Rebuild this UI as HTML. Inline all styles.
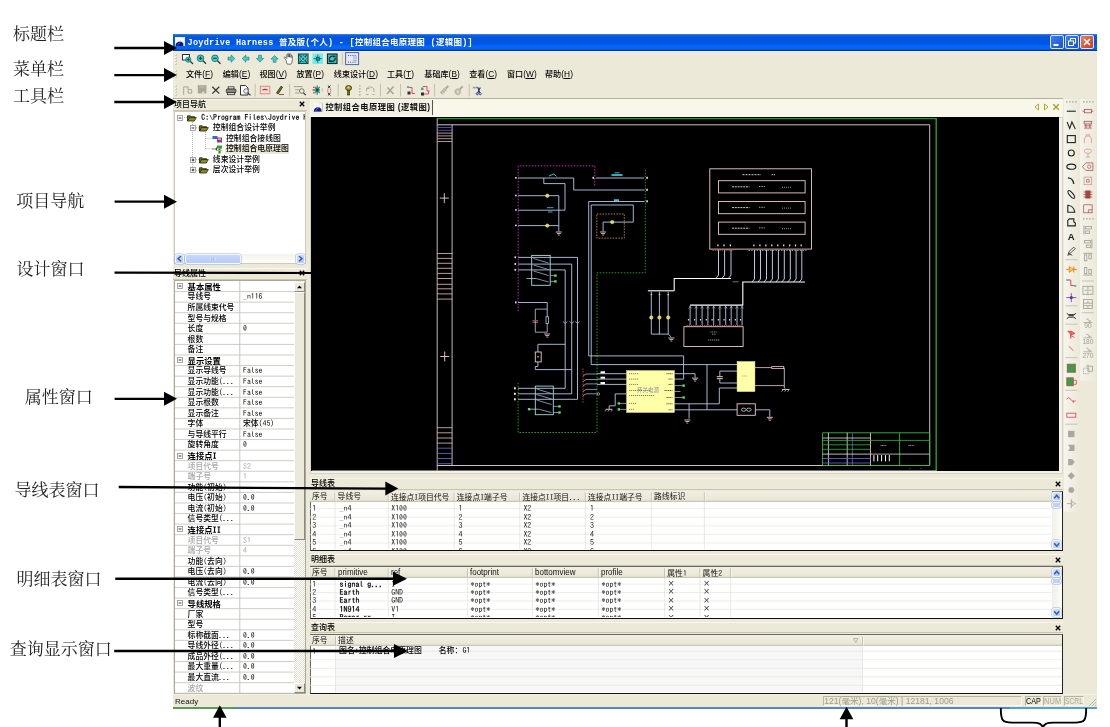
<!DOCTYPE html>
<html lang="zh"><head><meta charset="utf-8"><title>Joydrive Harness</title>
<style>
html,body{margin:0;padding:0;background:#fff}
body{width:1110px;height:727px;position:relative;overflow:hidden;will-change:transform;font-family:"Liberation Sans","Noto Sans CJK SC",sans-serif;color:#000}
div,span.t,span.s,span.m,svg{position:absolute;box-sizing:border-box}
span.t{white-space:nowrap;font-family:"Liberation Sans","Noto Sans CJK SC",sans-serif}
span.s{white-space:nowrap;font-family:"Liberation Serif","Noto Serif CJK SC",serif}
span.m{white-space:nowrap;font-family:"Liberation Mono","Noto Sans CJK SC",monospace}
</style></head><body>

<div style="left:173px;top:34px;width:924px;height:675px;background:#ece9d8"></div>
<div style="left:173px;top:33.8px;width:924px;height:17.2px;background:linear-gradient(#4a86e0 0,#0c5cd8 10%,#0054e2 25%,#0056e4 60%,#0468fc 72%,#0464f4 89%,#08389c 95%,#08389c 100%)"></div>
<div style="left:173px;top:51px;width:924px;height:1.2px;background:#e6eefa"></div>
<svg style="left:175px;top:37px" width="10" height="9" viewBox="0 0 10 9" ><rect x="0" y="0" width="10" height="9" fill="#f6f6f4"/><path d="M6.2 1 l2 -0.7 l1.2 1.6" stroke="#e4e088" stroke-width="1" fill="none"/><path d="M0.6 9 a4.2 4.2 0 0 1 7.8 -2.4 v2.4z" fill="#101878"/><path d="M2.4 8.4 q0.8 -2.2 3.2 -3" stroke="#4868e0" stroke-width="0.9" fill="none"/><path d="M9.4 2.4 v6.6" stroke="#e8e8f0" stroke-width="1.1"/></svg>
<span class="m" style="left:187.6px;top:38.3px;font-size:8.5px;line-height:11px;color:#fff;font-weight:bold;letter-spacing:0.27px">Joydrive Harness 普及版(个人) - [控制组合电原理图 (逻辑图)]</span>
<div style="left:1050px;top:35px;width:14px;height:14px;background:linear-gradient(135deg,#3c80f0,#1c50d0);border:1px solid #dce6fa;border-radius:2px"></div>
<svg style="left:1050px;top:35px" width="14" height="14" viewBox="0 0 14 14" ><rect x="3.5" y="9" width="5" height="2" fill="#fff"/></svg>
<div style="left:1065px;top:35px;width:14px;height:14px;background:linear-gradient(135deg,#3c80f0,#1c50d0);border:1px solid #dce6fa;border-radius:2px"></div>
<svg style="left:1065px;top:35px" width="14" height="14" viewBox="0 0 14 14" ><rect x="5.5" y="3.5" width="5" height="4.5" fill="none" stroke="#fff" stroke-width="1"/><rect x="3.5" y="6" width="5" height="4.5" fill="#2a64dc" stroke="#fff" stroke-width="1"/></svg>
<div style="left:1080px;top:35px;width:14px;height:14px;background:linear-gradient(135deg,#e88060,#c83c18);border:1px solid #dce6fa;border-radius:2px"></div>
<svg style="left:1080px;top:35px" width="14" height="14" viewBox="0 0 14 14" ><path d="M4 4 L10 10 M10 4 L4 10" stroke="#fff" stroke-width="1.6"/></svg>
<svg style="left:175px;top:54px" width="3" height="12" viewBox="0 0 3 12" ><rect x="0" y="0" width="2" height="2" fill="#cfccb8"/><rect x="0" y="0" width="1" height="1" fill="#f8f7f0"/><rect x="0" y="3" width="2" height="2" fill="#cfccb8"/><rect x="0" y="3" width="1" height="1" fill="#f8f7f0"/><rect x="0" y="6" width="2" height="2" fill="#cfccb8"/><rect x="0" y="6" width="1" height="1" fill="#f8f7f0"/><rect x="0" y="9" width="2" height="2" fill="#cfccb8"/><rect x="0" y="9" width="1" height="1" fill="#f8f7f0"/></svg>
<svg style="left:173px;top:51px" width="300" height="16" viewBox="0 0 300 16" ><rect x="9.5" y="3.5" width="7" height="5.5" fill="#fff" stroke="#303030" stroke-width="1"/><line x1="17" y1="10" x2="20" y2="13" stroke="#303030" stroke-width="1.2"/><circle cx="15.3" cy="8.6" r="2.6" fill="#30d8d8" stroke="#206868" stroke-width="0.8"/><path d="M13.8 8.6 h3 M15.3 7.1 v3" stroke="#103838" stroke-width="0.9"/><line x1="29.5" y1="9.3" x2="33.0" y2="12.8" stroke="#303030" stroke-width="1.3"/><circle cx="27.5" cy="7.3" r="3.3" fill="#30d8d8" stroke="#206868" stroke-width="0.9"/><path d="M25.7 7.3 h3.6 M27.5 5.5 v3.6" stroke="#103838" stroke-width="1.1"/><line x1="44" y1="9.3" x2="47.5" y2="12.8" stroke="#303030" stroke-width="1.3"/><circle cx="42" cy="7.3" r="3.3" fill="#30d8d8" stroke="#206868" stroke-width="0.9"/><path d="M40.2 7.3 h3.6" stroke="#103838" stroke-width="1.1"/><path d="M55 6.2 h3.2 v-2.2 l3.6 3.6 l-3.6 3.6 v-2.2 h-3.2z" fill="#30d8d8" stroke="#206868" stroke-width="0.6"/><path d="M76 6.2 h-3.2 v-2.2 l-3.6 3.6 l3.6 3.6 v-2.2 h3.2z" fill="#30d8d8" stroke="#206868" stroke-width="0.6"/><path d="M85.6 4.3 v3.2 h-2.2 l3.6 3.6 l3.6 -3.6 h-2.2 v-3.2z" fill="#30d8d8" stroke="#206868" stroke-width="0.6"/><path d="M100.2 11.3 v-3.2 h-2.2 l3.6 -3.6 l3.6 3.6 h-2.2 v3.2z" fill="#30d8d8" stroke="#206868" stroke-width="0.6"/><path d="M113.2 9.2 l-2.2 -2.6 q0.6 -1.2 1.6 -0.2 l1.2 1.2 v-4 q0.7 -0.9 1.4 0 v2.6 v-3.4 q0.7 -0.9 1.4 0 v3.4 v-2.8 q0.7 -0.9 1.4 0 v3.2 v-1.8 q0.7 -0.8 1.3 0 v4 q0 2.5 -1.4 4.4 h-3.6 q-1 -1.6 -1.1 -4z" fill="#fff" stroke="#484848" stroke-width="0.75"/><rect x="125.5" y="3" width="9.5" height="9.5" fill="#38c8c8" stroke="#184848" stroke-width="1.1"/><path d="M126.5 4 l7.5 7.5 M134 4 l-7.5 7.5" stroke="#185858" stroke-width="1.1"/><path d="M130.2 4.3 l3.4 3.4 l-3.4 3.4 l-3.4 -3.4z" fill="#50e0e0" stroke="#185050" stroke-width="0.7"/><rect x="129.2" y="6.7" width="2" height="2" fill="#185858"/><rect x="139.5" y="2.5" width="10.5" height="10.5" fill="#68f0f0"/><path d="M144.8 3.6 v8.3 M140.6 7.7 h8.4" stroke="#206868" stroke-width="1"/><path d="M142.6 5.5 l4.4 4.4 M147 5.5 l-4.4 4.4" stroke="#38a0a0" stroke-width="0.8"/><rect x="143.3" y="6.2" width="3" height="3" fill="#289090" stroke="#184848" stroke-width="0.7"/><rect x="154.5" y="3" width="9.5" height="9.5" fill="#38c8c8" stroke="#103030" stroke-width="1.2"/><path d="M156.3 8.6 a3 3 0 0 1 5.2 -2.4 M162.2 7 a3 3 0 0 1 -5.2 2.4" stroke="#103030" stroke-width="1.4" fill="none"/><path d="M160.2 4.4 h2.4 v2.4z M158.3 11 h-2.4 v-2.4z" fill="#103030"/><line x1="169.3" y1="2" x2="169.3" y2="14" stroke="#c4c0ae" stroke-width="0.9"/><rect x="172.6" y="1.6" width="13" height="12" fill="#e4e8f6" stroke="#4868a8" stroke-width="1"/><path d="M175 4.5 h8.5 M175 11.2 h8.5" stroke="#384878" stroke-width="0.9" stroke-dasharray="1 1.2"/><path d="M181 5.5 v5 M183 5.5 v5" stroke="#384878" stroke-width="0.8" stroke-dasharray="0.9 1"/></svg>
<svg style="left:175px;top:70px" width="3" height="9" viewBox="0 0 3 9" ><rect x="0" y="0" width="2" height="2" fill="#cfccb8"/><rect x="0" y="0" width="1" height="1" fill="#f8f7f0"/><rect x="0" y="3" width="2" height="2" fill="#cfccb8"/><rect x="0" y="3" width="1" height="1" fill="#f8f7f0"/><rect x="0" y="6" width="2" height="2" fill="#cfccb8"/><rect x="0" y="6" width="1" height="1" fill="#f8f7f0"/></svg>
<span class="t" style="left:186px;top:69px;font-size:8.1px;line-height:11px;color:#000;font-weight:500">文件<span style="font-size:8.3px;letter-spacing:0.1px">(<u>F</u>)</span></span>
<span class="t" style="left:222.7px;top:69px;font-size:8.1px;line-height:11px;color:#000;font-weight:500">编辑<span style="font-size:8.3px;letter-spacing:0.1px">(<u>E</u>)</span></span>
<span class="t" style="left:259.5px;top:69px;font-size:8.1px;line-height:11px;color:#000;font-weight:500">视图<span style="font-size:8.3px;letter-spacing:0.1px">(<u>V</u>)</span></span>
<span class="t" style="left:296.5px;top:69px;font-size:8.1px;line-height:11px;color:#000;font-weight:500">放置<span style="font-size:8.3px;letter-spacing:0.1px">(<u>P</u>)</span></span>
<span class="t" style="left:333.8px;top:69px;font-size:8.1px;line-height:11px;color:#000;font-weight:500">线束设计<span style="font-size:8.3px;letter-spacing:0.1px">(<u>D</u>)</span></span>
<span class="t" style="left:387px;top:69px;font-size:8.1px;line-height:11px;color:#000;font-weight:500">工具<span style="font-size:8.3px;letter-spacing:0.1px">(<u>T</u>)</span></span>
<span class="t" style="left:424.3px;top:69px;font-size:8.1px;line-height:11px;color:#000;font-weight:500">基础库<span style="font-size:8.3px;letter-spacing:0.1px">(<u>B</u>)</span></span>
<span class="t" style="left:469.2px;top:69px;font-size:8.1px;line-height:11px;color:#000;font-weight:500">查看<span style="font-size:8.3px;letter-spacing:0.1px">(<u>C</u>)</span></span>
<span class="t" style="left:507px;top:69px;font-size:8.1px;line-height:11px;color:#000;font-weight:500">窗口<span style="font-size:8.3px;letter-spacing:0.1px">(<u>W</u>)</span></span>
<span class="t" style="left:545px;top:69px;font-size:8.1px;line-height:11px;color:#000;font-weight:500">帮助<span style="font-size:8.3px;letter-spacing:0.1px">(<u>H</u>)</span></span>
<svg style="left:175px;top:85px" width="3" height="12" viewBox="0 0 3 12" ><rect x="0" y="0" width="2" height="2" fill="#cfccb8"/><rect x="0" y="0" width="1" height="1" fill="#f8f7f0"/><rect x="0" y="3" width="2" height="2" fill="#cfccb8"/><rect x="0" y="3" width="1" height="1" fill="#f8f7f0"/><rect x="0" y="6" width="2" height="2" fill="#cfccb8"/><rect x="0" y="6" width="1" height="1" fill="#f8f7f0"/><rect x="0" y="9" width="2" height="2" fill="#cfccb8"/><rect x="0" y="9" width="1" height="1" fill="#f8f7f0"/></svg>
<svg style="left:173px;top:82px" width="320" height="16" viewBox="0 0 320 16" ><path d="M10.7 4.9 v8 M10.7 4.9 h4.6 M15.1 4.9 v6.2 h3.6 v-3.5 h-3.6" stroke="#a8a598" stroke-width="1" fill="none"/><rect x="24.8" y="3.2" width="8.6" height="8.2" fill="#a8a598"/><rect x="26.8" y="3.6" width="4.6" height="2.6" fill="#b8b5a6"/><rect x="29" y="9.6" width="2.4" height="1.8" fill="#dedbca"/><path d="M39.3 4.7 L46.3 11.6 M46.3 4.7 L39.3 11.6" stroke="#383838" stroke-width="1.3"/><rect x="55.2" y="4.8" width="5.8" height="2.4" fill="#f4f4f0" stroke="#404040" stroke-width="0.9"/><rect x="53.3" y="7" width="9.6" height="3.8" rx="1.2" fill="#8c8878" stroke="#303030" stroke-width="0.9"/><rect x="54.5" y="10.5" width="7.2" height="2.2" fill="#d8d4c4" stroke="#303030" stroke-width="0.8"/><path d="M67.5 3.5 h5 l2.5 2.5 v7 h-7.5z" fill="#fff" stroke="#303030" stroke-width="1"/><circle cx="73" cy="9" r="2.3" fill="#e8f4f8" stroke="#505860" stroke-width="0.8"/><line x1="74.8" y1="10.8" x2="77.5" y2="13.3" stroke="#303030" stroke-width="1.1"/><line x1="82.2" y1="2" x2="82.2" y2="14.5" stroke="#c4c0ae" stroke-width="1"/><rect x="87.3" y="4.3" width="9.5" height="7.5" fill="#f2dcd4" stroke="#d88c88" stroke-width="1"/><path d="M89.5 8 q2.5 -1.2 5 0" stroke="#a83838" stroke-width="1.1" fill="none"/><path d="M103.5 11 L108 4.2 L109.6 5.2 L105.2 12z" fill="#607020" stroke="#202808" stroke-width="0.7"/><path d="M106 12.5 h5" stroke="#c04040" stroke-width="1"/><line x1="116.6" y1="2" x2="116.6" y2="14.5" stroke="#c4c0ae" stroke-width="1"/><path d="M121 4.6 h8.5 M122.2 7.8 h4 M122.2 11 h4" stroke="#808078" stroke-width="0.7"/><circle cx="128.8" cy="9" r="2.3" fill="none" stroke="#585858" stroke-width="0.8"/><line x1="130.5" y1="10.8" x2="132.8" y2="13.2" stroke="#282828" stroke-width="1.1"/><path d="M144.2 3.4 v9.4 M140.6 8 h6.4 M141.8 5 l4.8 6 M146.6 5 l-4.8 6" stroke="#2a9088" stroke-width="1.3"/><rect x="143.2" y="6.6" width="2" height="2.8" fill="#104840"/><path d="M140 5.4 h1.6 M139.6 8 h1.6 M140 10.8 h1.6" stroke="#d84848" stroke-width="1.3"/><path d="M149.2 6.4 v3.4" stroke="#d8a0a0" stroke-width="0.8"/><path d="M154.9 3.6 l2.6 2.4 M157.5 3.6 l-2.6 2.4 M154.9 11 l2.6 2.4 M157.5 11 l-2.6 2.4" stroke="#183c3c" stroke-width="1"/><path d="M155.2 6.6 q-1.2 2 0 4.2 M157.2 6.6 q1.2 2 0 4.2" stroke="#e07070" stroke-width="0.9" fill="none"/><line x1="165.2" y1="2" x2="165.2" y2="14.5" stroke="#c4c0ae" stroke-width="1"/><ellipse cx="175.6" cy="6" rx="3" ry="2.4" fill="#a4a428" stroke="#38380c" stroke-width="0.9"/><rect x="174.5" y="8.2" width="2.2" height="4.8" fill="#70701c" stroke="#2c2c08" stroke-width="0.6"/><circle cx="175.4" cy="5.6" r="0.9" fill="#e8e890"/><rect x="186" y="3" width="1.6" height="1.6" fill="#bcb8a4"/><rect x="186" y="6" width="1.6" height="1.6" fill="#bcb8a4"/><rect x="186" y="9" width="1.6" height="1.6" fill="#bcb8a4"/><rect x="186" y="12" width="1.6" height="1.6" fill="#bcb8a4"/><path d="M193.5 9.5 v-3 h3 M193.5 6.5 q4 -3.5 7.5 0.5 v3" stroke="#a8a598" stroke-width="0.9" fill="none"/><path d="M193 12.5 h2.5 M199.5 12.5 h2" stroke="#a8a598" stroke-width="0.9"/><line x1="207.5" y1="2" x2="207.5" y2="14.5" stroke="#c4c0ae" stroke-width="1"/><path d="M214.5 5.5 l6 6.5 M220.5 4.5 l-6.5 7.5" stroke="#a8a598" stroke-width="1.5"/><line x1="227.5" y1="2" x2="227.5" y2="14.5" stroke="#c4c0ae" stroke-width="1"/><path d="M235.5 5.5 h3.5 v6 h3" stroke="#e04868" stroke-width="1" fill="none"/><rect x="234" y="4" width="2.2" height="2" fill="#40c0b0"/><rect x="234.5" y="9.5" width="3" height="3" fill="#303030"/><path d="M250 4.5 h4 v4.5 h2.5 M250.5 12 h5 v-3" stroke="#e04868" stroke-width="1" fill="none"/><rect x="248" y="5.5" width="2.5" height="2.5" fill="#40a0a0"/><rect x="248" y="10.5" width="3" height="3" fill="#303030"/><line x1="261.6" y1="2" x2="261.6" y2="14.5" stroke="#c4c0ae" stroke-width="1"/><g transform="translate(271.5 8.2)"><path d="M-3.6 3.2 L1.6 -2" stroke="#c4c1b2" stroke-width="3"/><path d="M-4.2 1.4 l3 3 M-2.6 -0.2 l3 3 M-1 -1.8 l3 3" stroke="#a8a598" stroke-width="0.7"/><path d="M1.4 -1.8 L3.8 -4.2" stroke="#a8a598" stroke-width="1.8"/></g><g transform="translate(285.6 8.4)"><circle cx="-0.8" cy="1.4" r="3" fill="#c4c1b2" stroke="#a8a598" stroke-width="0.8" stroke-dasharray="1.4 0.9"/><circle cx="-0.8" cy="1.4" r="1" fill="#e4e1d2"/><path d="M1.2 -1 L4 -4" stroke="#a8a598" stroke-width="1.9"/></g><line x1="296.2" y1="2" x2="296.2" y2="14.5" stroke="#c4c0ae" stroke-width="1"/><g transform="translate(304.5 8.4)"><path d="M-4.4 -3.6 l1.6 1.6 M-2.8 -3.6 l-1.6 1.6 M-2.2 -3.6 l1.6 1.6 M-0.6 -3.6 l-1.6 1.6" stroke="#404860" stroke-width="0.6"/><path d="M0.2 -3.4 L2.2 2.4 M2.8 -3 L0.2 2.6" stroke="#1c3480" stroke-width="1.1"/><circle cx="-0.3" cy="3.4" r="1.1" fill="none" stroke="#1c3480" stroke-width="0.8"/><circle cx="2.7" cy="3.3" r="1.1" fill="none" stroke="#1c3480" stroke-width="0.8"/></g></svg>
<div style="left:173px;top:98px;width:890px;height:1px;background:#b4b09c"></div>
<div style="left:173px;top:99px;width:134px;height:12px;background:#ece9d8;border-top:1px solid #f8f7f0;border-bottom:1px solid #c8c4b0"></div>
<span class="t" style="left:174px;top:100px;font-size:8px;line-height:10px;font-weight:500;">项目导航</span>
<svg style="left:298.5px;top:100.9px" width="6" height="6" viewBox="0 0 6 6" ><path d="M0.8 0.8 L5.2 5.2 M5.2 0.8 L0.8 5.2" stroke="#000" stroke-width="1.3"/></svg>
<div style="left:174px;top:111px;width:132px;height:153px;background:#fff;border:1px solid #cfcbb8"></div>
<svg style="left:174px;top:111px" width="132" height="70" viewBox="0 0 132 70" ><path d="M6 6.5 v0 M10 6.5 h4 M18.5 11 v48.5 M18.5 16.9 h-0 M22 16.9 h4 M18.5 48.5 h-0 M22 48.5 h4 M22 59.3 h4 M31.5 21 v17 M31.5 27.6 h7 M31.5 37.8 h7" stroke="#a0a0a0" stroke-width="0.8" stroke-dasharray="1 1" fill="none"/></svg>
<svg style="left:177px;top:114.5px" width="6" height="6" viewBox="0 0 6 6" ><rect x="0.5" y="0.5" width="5" height="5" fill="#fff" stroke="#909090" stroke-width="0.8"/><path d="M1.6 3 h2.8" stroke="#000" stroke-width="0.8"/></svg>
<svg style="left:187px;top:113.5px" width="10" height="8" viewBox="0 0 10 8" ><path d="M0.5 7 v-5.2 h2.8 l0.9 0.9 h3.3 v1.5" fill="#6c6c1c" stroke="#202004" stroke-width="0.8"/><path d="M0.5 7 l2 -3.4 h6.8 l-2 3.4z" fill="#8e8e2c" stroke="#202004" stroke-width="0.8"/></svg>
<span class="t" style="left:201.3px;top:112.5px;font-size:7.85px;line-height:9.85px;font-weight:500;width:104px;overflow:hidden;font-weight:bold;color:#222"><span style="font-family:IPAGothic,'Liberation Mono',monospace;font-size:1.0em;letter-spacing:0px">C:</span><span style="font-family:'Liberation Mono',monospace;font-size:0.833em">\</span><span style="font-family:IPAGothic,'Liberation Mono',monospace;font-size:1.0em;letter-spacing:0px">Program Files</span><span style="font-family:'Liberation Mono',monospace;font-size:0.833em">\</span><span style="font-family:IPAGothic,'Liberation Mono',monospace;font-size:1.0em;letter-spacing:0px">Joydrive H</span></span>
<svg style="left:189.5px;top:125.1px" width="6" height="6" viewBox="0 0 6 6" ><rect x="0.5" y="0.5" width="5" height="5" fill="#fff" stroke="#909090" stroke-width="0.8"/><path d="M1.6 3 h2.8" stroke="#000" stroke-width="0.8"/></svg>
<svg style="left:199px;top:124.1px" width="10" height="8" viewBox="0 0 10 8" ><path d="M0.5 7 v-5.2 h2.8 l0.9 0.9 h3.3 v1.5" fill="#6c6c1c" stroke="#202004" stroke-width="0.8"/><path d="M0.5 7 l2 -3.4 h6.8 l-2 3.4z" fill="#8e8e2c" stroke="#202004" stroke-width="0.8"/></svg>
<span class="t" style="left:212.8px;top:123.1px;font-size:7.85px;line-height:9.85px;font-weight:500;">控制组合设计举例</span>
<svg style="left:212px;top:134.8px" width="11" height="8" viewBox="0 0 11 8" ><rect x="0.5" y="1" width="5" height="3" fill="#3070c0"/><rect x="5" y="2.5" width="5" height="5" fill="#a030a0"/><rect x="6" y="3.5" width="3" height="1.2" fill="#f0f060"/></svg>
<span class="t" style="left:226px;top:133.8px;font-size:7.85px;line-height:9.85px;font-weight:500;">控制组合接线图</span>
<div style="left:225px;top:143.7px;width:64px;height:10.3px;background:#ece9d8"></div>
<svg style="left:212px;top:145px" width="11" height="9" viewBox="0 0 11 9" ><path d="M0 4 h3" stroke="#606060" stroke-width="0.8"/><path d="M3 4 l2 -2 v4z" fill="#404040"/><rect x="5" y="0.5" width="5" height="3" fill="#30a030"/><rect x="6.5" y="3.5" width="2" height="5" fill="#208020"/><path d="M5 5.5 h5" stroke="#c0c040" stroke-width="1"/></svg>
<span class="t" style="left:226px;top:144px;font-size:7.85px;line-height:9.85px;font-weight:500;">控制组合电原理图</span>
<svg style="left:189.5px;top:156.6px" width="6" height="6" viewBox="0 0 6 6" ><rect x="0.5" y="0.5" width="5" height="5" fill="#fff" stroke="#909090" stroke-width="0.8"/><path d="M1.6 3 h2.8" stroke="#000" stroke-width="0.8"/><path d="M3 1.6 v2.8" stroke="#000" stroke-width="0.8"/></svg>
<svg style="left:199px;top:155.6px" width="10" height="8" viewBox="0 0 10 8" ><path d="M0.5 7 v-5.2 h2.8 l0.9 0.9 h3.3 v1.5" fill="#6c6c1c" stroke="#202004" stroke-width="0.8"/><path d="M0.5 7 l2 -3.4 h6.8 l-2 3.4z" fill="#8e8e2c" stroke="#202004" stroke-width="0.8"/></svg>
<span class="t" style="left:212.8px;top:154.6px;font-size:7.85px;line-height:9.85px;font-weight:500;">线束设计举例</span>
<svg style="left:189.5px;top:167.4px" width="6" height="6" viewBox="0 0 6 6" ><rect x="0.5" y="0.5" width="5" height="5" fill="#fff" stroke="#909090" stroke-width="0.8"/><path d="M1.6 3 h2.8" stroke="#000" stroke-width="0.8"/><path d="M3 1.6 v2.8" stroke="#000" stroke-width="0.8"/></svg>
<svg style="left:199px;top:166.4px" width="10" height="8" viewBox="0 0 10 8" ><path d="M0.5 7 v-5.2 h2.8 l0.9 0.9 h3.3 v1.5" fill="#6c6c1c" stroke="#202004" stroke-width="0.8"/><path d="M0.5 7 l2 -3.4 h6.8 l-2 3.4z" fill="#8e8e2c" stroke="#202004" stroke-width="0.8"/></svg>
<span class="t" style="left:212.8px;top:165.4px;font-size:7.85px;line-height:9.85px;font-weight:500;">层次设计举例</span>
<div style="left:175px;top:253.8px;width:130px;height:9.7px;background:linear-gradient(#f4f3ee,#fdfdfb)"></div>
<div style="left:175px;top:254px;width:9px;height:9.5px;background:linear-gradient(135deg,#d4e0fc,#b4c8f4);border:1px solid #f0f4ff;border-radius:2px;box-shadow:0 0 0 0.5px #98b0e8"></div>
<svg style="left:175px;top:254px" width="9" height="9.5" viewBox="0 0 9 9.5" ><path d="M6.0 2.25 L3.0 4.75 L6.0 7.25" stroke="#3858a8" stroke-width="1.5" fill="none"/></svg>
<div style="left:295.5px;top:254px;width:9px;height:9.5px;background:linear-gradient(135deg,#d4e0fc,#b4c8f4);border:1px solid #f0f4ff;border-radius:2px;box-shadow:0 0 0 0.5px #98b0e8"></div>
<svg style="left:295.5px;top:254px" width="9" height="9.5" viewBox="0 0 9 9.5" ><path d="M3.0 2.25 L6.0 4.75 L3.0 7.25" stroke="#3858a8" stroke-width="1.5" fill="none"/></svg>
<div style="left:185px;top:254px;width:56px;height:9.5px;background:linear-gradient(#c8d8fc,#b8ccf8);border:1px solid #f4f8ff;border-radius:2px;box-shadow:0 0 0 0.5px #98b0e8"></div>
<svg style="left:208px;top:256px" width="10" height="6" viewBox="0 0 10 6" ><path d="M3 1 v4 M5 1 v4 M7 1 v4" stroke="#e8f0ff" stroke-width="0.8"/><path d="M3.8 1 v4 M5.8 1 v4" stroke="#8ca4dc" stroke-width="0.6"/></svg>
<div style="left:173px;top:267.5px;width:134px;height:12px;background:#ece9d8;border-top:1px solid #f8f7f0;border-bottom:1px solid #c8c4b0"></div>
<span class="t" style="left:174px;top:268.5px;font-size:8px;line-height:10px;font-weight:500;">导线属性</span>
<svg style="left:298.5px;top:269.6px" width="6" height="6" viewBox="0 0 6 6" ><path d="M0.8 0.8 L5.2 5.2 M5.2 0.8 L0.8 5.2" stroke="#000" stroke-width="1.3"/></svg>
<div style="left:174px;top:280.0px;width:132px;height:413.83000000000004px;background:#fff;border:1px solid #aca899"></div>
<svg style="left:175px;top:280.8px" width="120" height="413" viewBox="0 0 120 413" ><line x1="0" y1="10.57" x2="119.5" y2="10.57" stroke="#cac8be" stroke-width="0.9"/><line x1="0" y1="21.14" x2="119.5" y2="21.14" stroke="#cac8be" stroke-width="0.9"/><line x1="0" y1="31.71" x2="119.5" y2="31.71" stroke="#cac8be" stroke-width="0.9"/><line x1="0" y1="42.28" x2="119.5" y2="42.28" stroke="#cac8be" stroke-width="0.9"/><line x1="0" y1="52.85" x2="119.5" y2="52.85" stroke="#cac8be" stroke-width="0.9"/><line x1="0" y1="63.42" x2="119.5" y2="63.42" stroke="#cac8be" stroke-width="0.9"/><line x1="0" y1="73.99" x2="119.5" y2="73.99" stroke="#cac8be" stroke-width="0.9"/><line x1="0" y1="84.56" x2="119.5" y2="84.56" stroke="#cac8be" stroke-width="0.9"/><line x1="0" y1="95.13" x2="119.5" y2="95.13" stroke="#cac8be" stroke-width="0.9"/><line x1="0" y1="105.70" x2="119.5" y2="105.70" stroke="#cac8be" stroke-width="0.9"/><line x1="0" y1="116.27" x2="119.5" y2="116.27" stroke="#cac8be" stroke-width="0.9"/><line x1="0" y1="126.84" x2="119.5" y2="126.84" stroke="#cac8be" stroke-width="0.9"/><line x1="0" y1="137.41" x2="119.5" y2="137.41" stroke="#cac8be" stroke-width="0.9"/><line x1="0" y1="147.98" x2="119.5" y2="147.98" stroke="#cac8be" stroke-width="0.9"/><line x1="0" y1="158.55" x2="119.5" y2="158.55" stroke="#cac8be" stroke-width="0.9"/><line x1="0" y1="169.12" x2="119.5" y2="169.12" stroke="#cac8be" stroke-width="0.9"/><line x1="0" y1="179.69" x2="119.5" y2="179.69" stroke="#cac8be" stroke-width="0.9"/><line x1="0" y1="190.26" x2="119.5" y2="190.26" stroke="#cac8be" stroke-width="0.9"/><line x1="0" y1="200.83" x2="119.5" y2="200.83" stroke="#cac8be" stroke-width="0.9"/><line x1="0" y1="211.40" x2="119.5" y2="211.40" stroke="#cac8be" stroke-width="0.9"/><line x1="0" y1="221.97" x2="119.5" y2="221.97" stroke="#cac8be" stroke-width="0.9"/><line x1="0" y1="232.54" x2="119.5" y2="232.54" stroke="#cac8be" stroke-width="0.9"/><line x1="0" y1="243.11" x2="119.5" y2="243.11" stroke="#cac8be" stroke-width="0.9"/><line x1="0" y1="253.68" x2="119.5" y2="253.68" stroke="#cac8be" stroke-width="0.9"/><line x1="0" y1="264.25" x2="119.5" y2="264.25" stroke="#cac8be" stroke-width="0.9"/><line x1="0" y1="274.82" x2="119.5" y2="274.82" stroke="#cac8be" stroke-width="0.9"/><line x1="0" y1="285.39" x2="119.5" y2="285.39" stroke="#cac8be" stroke-width="0.9"/><line x1="0" y1="295.96" x2="119.5" y2="295.96" stroke="#cac8be" stroke-width="0.9"/><line x1="0" y1="306.53" x2="119.5" y2="306.53" stroke="#cac8be" stroke-width="0.9"/><line x1="0" y1="317.10" x2="119.5" y2="317.10" stroke="#cac8be" stroke-width="0.9"/><line x1="0" y1="327.67" x2="119.5" y2="327.67" stroke="#cac8be" stroke-width="0.9"/><line x1="0" y1="338.24" x2="119.5" y2="338.24" stroke="#cac8be" stroke-width="0.9"/><line x1="0" y1="348.81" x2="119.5" y2="348.81" stroke="#cac8be" stroke-width="0.9"/><line x1="0" y1="359.38" x2="119.5" y2="359.38" stroke="#cac8be" stroke-width="0.9"/><line x1="0" y1="369.95" x2="119.5" y2="369.95" stroke="#cac8be" stroke-width="0.9"/><line x1="0" y1="380.52" x2="119.5" y2="380.52" stroke="#cac8be" stroke-width="0.9"/><line x1="0" y1="391.09" x2="119.5" y2="391.09" stroke="#cac8be" stroke-width="0.9"/><line x1="0" y1="401.66" x2="119.5" y2="401.66" stroke="#cac8be" stroke-width="0.9"/><line x1="0" y1="412.23" x2="119.5" y2="412.23" stroke="#cac8be" stroke-width="0.9"/><line x1="64.8" y1="0" x2="64.8" y2="412.2" stroke="#c0beb2" stroke-width="0.9"/></svg>
<svg style="left:177px;top:283.38500000000005px" width="6" height="6" viewBox="0 0 6 6" ><rect x="0.5" y="0.5" width="5" height="5" fill="#fff" stroke="#909090" stroke-width="0.8"/><path d="M1.6 3 h2.8" stroke="#000" stroke-width="0.8"/></svg>
<span class="t" style="left:187.6px;top:282.0px;font-size:8.3px;line-height:10.3px;font-weight:500;font-weight:bold">基本属性</span>
<span class="t" style="left:187.6px;top:292.47px;font-size:7.8px;line-height:9.8px;font-weight:500;color:#000">导线号</span>
<span class="t" style="left:243px;top:292.47px;font-size:7.8px;line-height:9.8px;font-weight:500;color:#000"><span style="font-family:IPAGothic,'Liberation Mono',monospace;font-size:1.0em;letter-spacing:0px">_n116</span></span>
<span class="t" style="left:187.6px;top:303.04px;font-size:7.8px;line-height:9.8px;font-weight:500;color:#000">所属线束代号</span>
<span class="t" style="left:187.6px;top:313.61px;font-size:7.8px;line-height:9.8px;font-weight:500;color:#000">型号与规格</span>
<span class="t" style="left:187.6px;top:324.18000000000006px;font-size:7.8px;line-height:9.8px;font-weight:500;color:#000">长度</span>
<span class="t" style="left:243px;top:324.18000000000006px;font-size:7.8px;line-height:9.8px;font-weight:500;color:#000"><span style="font-family:IPAGothic,'Liberation Mono',monospace;font-size:1.0em;letter-spacing:0px">0</span></span>
<span class="t" style="left:187.6px;top:334.75000000000006px;font-size:7.8px;line-height:9.8px;font-weight:500;color:#000">根数</span>
<span class="t" style="left:187.6px;top:345.32000000000005px;font-size:7.8px;line-height:9.8px;font-weight:500;color:#000">备注</span>
<svg style="left:177px;top:357.37500000000006px" width="6" height="6" viewBox="0 0 6 6" ><rect x="0.5" y="0.5" width="5" height="5" fill="#fff" stroke="#909090" stroke-width="0.8"/><path d="M1.6 3 h2.8" stroke="#000" stroke-width="0.8"/></svg>
<span class="t" style="left:187.6px;top:355.99px;font-size:8.3px;line-height:10.3px;font-weight:500;font-weight:bold">显示设置</span>
<span class="t" style="left:187.6px;top:366.46000000000004px;font-size:7.8px;line-height:9.8px;font-weight:500;color:#000">显示导线号</span>
<span class="t" style="left:243px;top:366.46000000000004px;font-size:7.8px;line-height:9.8px;font-weight:500;color:#000"><span style="font-family:IPAGothic,'Liberation Mono',monospace;font-size:1.0em;letter-spacing:0px">False</span></span>
<span class="t" style="left:187.6px;top:377.03000000000003px;font-size:7.8px;line-height:9.8px;font-weight:500;color:#000">显示功能<span style="font-family:IPAGothic,'Liberation Mono',monospace;font-size:1.0em;letter-spacing:0px">(...</span></span>
<span class="t" style="left:243px;top:377.03000000000003px;font-size:7.8px;line-height:9.8px;font-weight:500;color:#000"><span style="font-family:IPAGothic,'Liberation Mono',monospace;font-size:1.0em;letter-spacing:0px">False</span></span>
<span class="t" style="left:187.6px;top:387.6px;font-size:7.8px;line-height:9.8px;font-weight:500;color:#000">显示功能<span style="font-family:IPAGothic,'Liberation Mono',monospace;font-size:1.0em;letter-spacing:0px">(...</span></span>
<span class="t" style="left:243px;top:387.6px;font-size:7.8px;line-height:9.8px;font-weight:500;color:#000"><span style="font-family:IPAGothic,'Liberation Mono',monospace;font-size:1.0em;letter-spacing:0px">False</span></span>
<span class="t" style="left:187.6px;top:398.1700000000001px;font-size:7.8px;line-height:9.8px;font-weight:500;color:#000">显示根数</span>
<span class="t" style="left:243px;top:398.1700000000001px;font-size:7.8px;line-height:9.8px;font-weight:500;color:#000"><span style="font-family:IPAGothic,'Liberation Mono',monospace;font-size:1.0em;letter-spacing:0px">False</span></span>
<span class="t" style="left:187.6px;top:408.74px;font-size:7.8px;line-height:9.8px;font-weight:500;color:#000">显示备注</span>
<span class="t" style="left:243px;top:408.74px;font-size:7.8px;line-height:9.8px;font-weight:500;color:#000"><span style="font-family:IPAGothic,'Liberation Mono',monospace;font-size:1.0em;letter-spacing:0px">False</span></span>
<span class="t" style="left:187.6px;top:419.31000000000006px;font-size:7.8px;line-height:9.8px;font-weight:500;color:#000">字体</span>
<span class="t" style="left:243px;top:419.31000000000006px;font-size:7.8px;line-height:9.8px;font-weight:500;color:#000">宋体<span style="font-family:IPAGothic,'Liberation Mono',monospace;font-size:1.0em;letter-spacing:0px">(45)</span></span>
<span class="t" style="left:187.6px;top:429.88000000000005px;font-size:7.8px;line-height:9.8px;font-weight:500;color:#000">与导线平行</span>
<span class="t" style="left:243px;top:429.88000000000005px;font-size:7.8px;line-height:9.8px;font-weight:500;color:#000"><span style="font-family:IPAGothic,'Liberation Mono',monospace;font-size:1.0em;letter-spacing:0px">False</span></span>
<span class="t" style="left:187.6px;top:440.45000000000005px;font-size:7.8px;line-height:9.8px;font-weight:500;color:#000">旋转角度</span>
<span class="t" style="left:243px;top:440.45000000000005px;font-size:7.8px;line-height:9.8px;font-weight:500;color:#000"><span style="font-family:IPAGothic,'Liberation Mono',monospace;font-size:1.0em;letter-spacing:0px">0</span></span>
<svg style="left:177px;top:452.50500000000005px" width="6" height="6" viewBox="0 0 6 6" ><rect x="0.5" y="0.5" width="5" height="5" fill="#fff" stroke="#909090" stroke-width="0.8"/><path d="M1.6 3 h2.8" stroke="#000" stroke-width="0.8"/></svg>
<span class="t" style="left:187.6px;top:451.12px;font-size:8.3px;line-height:10.3px;font-weight:500;font-weight:bold">连接点<span style="font-family:IPAGothic,'Liberation Mono',monospace;font-size:1.0em;letter-spacing:0px">I</span></span>
<span class="t" style="left:187.6px;top:461.59000000000003px;font-size:7.8px;line-height:9.8px;font-weight:500;color:#a8a8a8">项目代号</span>
<span class="t" style="left:243px;top:461.59000000000003px;font-size:7.8px;line-height:9.8px;font-weight:500;color:#a8a8a8"><span style="font-family:IPAGothic,'Liberation Mono',monospace;font-size:1.0em;letter-spacing:0px">S2</span></span>
<span class="t" style="left:187.6px;top:472.16px;font-size:7.8px;line-height:9.8px;font-weight:500;color:#a8a8a8">端子号</span>
<span class="t" style="left:243px;top:472.16px;font-size:7.8px;line-height:9.8px;font-weight:500;color:#a8a8a8"><span style="font-family:IPAGothic,'Liberation Mono',monospace;font-size:1.0em;letter-spacing:0px">1</span></span>
<span class="t" style="left:187.6px;top:482.73px;font-size:7.8px;line-height:9.8px;font-weight:500;color:#000">功能<span style="font-family:IPAGothic,'Liberation Mono',monospace;font-size:1.0em;letter-spacing:0px">(</span>初始<span style="font-family:IPAGothic,'Liberation Mono',monospace;font-size:1.0em;letter-spacing:0px">)</span></span>
<span class="t" style="left:187.6px;top:493.30000000000007px;font-size:7.8px;line-height:9.8px;font-weight:500;color:#000">电压<span style="font-family:IPAGothic,'Liberation Mono',monospace;font-size:1.0em;letter-spacing:0px">(</span>初始<span style="font-family:IPAGothic,'Liberation Mono',monospace;font-size:1.0em;letter-spacing:0px">)</span></span>
<span class="t" style="left:243px;top:493.30000000000007px;font-size:7.8px;line-height:9.8px;font-weight:500;color:#000"><span style="font-family:IPAGothic,'Liberation Mono',monospace;font-size:1.0em;letter-spacing:0px">0.0</span></span>
<span class="t" style="left:187.6px;top:503.87px;font-size:7.8px;line-height:9.8px;font-weight:500;color:#000">电流<span style="font-family:IPAGothic,'Liberation Mono',monospace;font-size:1.0em;letter-spacing:0px">(</span>初始<span style="font-family:IPAGothic,'Liberation Mono',monospace;font-size:1.0em;letter-spacing:0px">)</span></span>
<span class="t" style="left:243px;top:503.87px;font-size:7.8px;line-height:9.8px;font-weight:500;color:#000"><span style="font-family:IPAGothic,'Liberation Mono',monospace;font-size:1.0em;letter-spacing:0px">0.0</span></span>
<span class="t" style="left:187.6px;top:514.44px;font-size:7.8px;line-height:9.8px;font-weight:500;color:#000">信号类型<span style="font-family:IPAGothic,'Liberation Mono',monospace;font-size:1.0em;letter-spacing:0px">(...</span></span>
<svg style="left:177px;top:526.495px" width="6" height="6" viewBox="0 0 6 6" ><rect x="0.5" y="0.5" width="5" height="5" fill="#fff" stroke="#909090" stroke-width="0.8"/><path d="M1.6 3 h2.8" stroke="#000" stroke-width="0.8"/></svg>
<span class="t" style="left:187.6px;top:525.1100000000001px;font-size:8.3px;line-height:10.3px;font-weight:500;font-weight:bold">连接点<span style="font-family:IPAGothic,'Liberation Mono',monospace;font-size:1.0em;letter-spacing:0px">II</span></span>
<span class="t" style="left:187.6px;top:535.58px;font-size:7.8px;line-height:9.8px;font-weight:500;color:#a8a8a8">项目代号</span>
<span class="t" style="left:243px;top:535.58px;font-size:7.8px;line-height:9.8px;font-weight:500;color:#a8a8a8"><span style="font-family:IPAGothic,'Liberation Mono',monospace;font-size:1.0em;letter-spacing:0px">S1</span></span>
<span class="t" style="left:187.6px;top:546.15px;font-size:7.8px;line-height:9.8px;font-weight:500;color:#a8a8a8">端子号</span>
<span class="t" style="left:243px;top:546.15px;font-size:7.8px;line-height:9.8px;font-weight:500;color:#a8a8a8"><span style="font-family:IPAGothic,'Liberation Mono',monospace;font-size:1.0em;letter-spacing:0px">4</span></span>
<span class="t" style="left:187.6px;top:556.72px;font-size:7.8px;line-height:9.8px;font-weight:500;color:#000">功能<span style="font-family:IPAGothic,'Liberation Mono',monospace;font-size:1.0em;letter-spacing:0px">(</span>去向<span style="font-family:IPAGothic,'Liberation Mono',monospace;font-size:1.0em;letter-spacing:0px">)</span></span>
<span class="t" style="left:187.6px;top:567.2900000000001px;font-size:7.8px;line-height:9.8px;font-weight:500;color:#000">电压<span style="font-family:IPAGothic,'Liberation Mono',monospace;font-size:1.0em;letter-spacing:0px">(</span>去向<span style="font-family:IPAGothic,'Liberation Mono',monospace;font-size:1.0em;letter-spacing:0px">)</span></span>
<span class="t" style="left:243px;top:567.2900000000001px;font-size:7.8px;line-height:9.8px;font-weight:500;color:#000"><span style="font-family:IPAGothic,'Liberation Mono',monospace;font-size:1.0em;letter-spacing:0px">0.0</span></span>
<span class="t" style="left:187.6px;top:577.86px;font-size:7.8px;line-height:9.8px;font-weight:500;color:#000">电流<span style="font-family:IPAGothic,'Liberation Mono',monospace;font-size:1.0em;letter-spacing:0px">(</span>去向<span style="font-family:IPAGothic,'Liberation Mono',monospace;font-size:1.0em;letter-spacing:0px">)</span></span>
<span class="t" style="left:243px;top:577.86px;font-size:7.8px;line-height:9.8px;font-weight:500;color:#000"><span style="font-family:IPAGothic,'Liberation Mono',monospace;font-size:1.0em;letter-spacing:0px">0.0</span></span>
<span class="t" style="left:187.6px;top:588.4300000000001px;font-size:7.8px;line-height:9.8px;font-weight:500;color:#000">信号类型<span style="font-family:IPAGothic,'Liberation Mono',monospace;font-size:1.0em;letter-spacing:0px">(...</span></span>
<svg style="left:177px;top:600.485px" width="6" height="6" viewBox="0 0 6 6" ><rect x="0.5" y="0.5" width="5" height="5" fill="#fff" stroke="#909090" stroke-width="0.8"/><path d="M1.6 3 h2.8" stroke="#000" stroke-width="0.8"/></svg>
<span class="t" style="left:187.6px;top:599.1000000000001px;font-size:8.3px;line-height:10.3px;font-weight:500;font-weight:bold">导线规格</span>
<span class="t" style="left:187.6px;top:609.57px;font-size:7.8px;line-height:9.8px;font-weight:500;color:#000">厂家</span>
<span class="t" style="left:187.6px;top:620.14px;font-size:7.8px;line-height:9.8px;font-weight:500;color:#000">型号</span>
<span class="t" style="left:187.6px;top:630.71px;font-size:7.8px;line-height:9.8px;font-weight:500;color:#000">标称截面<span style="font-family:IPAGothic,'Liberation Mono',monospace;font-size:1.0em;letter-spacing:0px">...</span></span>
<span class="t" style="left:243px;top:630.71px;font-size:7.8px;line-height:9.8px;font-weight:500;color:#000"><span style="font-family:IPAGothic,'Liberation Mono',monospace;font-size:1.0em;letter-spacing:0px">0.0</span></span>
<span class="t" style="left:187.6px;top:641.2800000000001px;font-size:7.8px;line-height:9.8px;font-weight:500;color:#000">导线外径<span style="font-family:IPAGothic,'Liberation Mono',monospace;font-size:1.0em;letter-spacing:0px">(...</span></span>
<span class="t" style="left:243px;top:641.2800000000001px;font-size:7.8px;line-height:9.8px;font-weight:500;color:#000"><span style="font-family:IPAGothic,'Liberation Mono',monospace;font-size:1.0em;letter-spacing:0px">0.0</span></span>
<span class="t" style="left:187.6px;top:651.85px;font-size:7.8px;line-height:9.8px;font-weight:500;color:#000">成品外径<span style="font-family:IPAGothic,'Liberation Mono',monospace;font-size:1.0em;letter-spacing:0px">(...</span></span>
<span class="t" style="left:243px;top:651.85px;font-size:7.8px;line-height:9.8px;font-weight:500;color:#000"><span style="font-family:IPAGothic,'Liberation Mono',monospace;font-size:1.0em;letter-spacing:0px">0.0</span></span>
<span class="t" style="left:187.6px;top:662.42px;font-size:7.8px;line-height:9.8px;font-weight:500;color:#000">最大重量<span style="font-family:IPAGothic,'Liberation Mono',monospace;font-size:1.0em;letter-spacing:0px">(...</span></span>
<span class="t" style="left:243px;top:662.42px;font-size:7.8px;line-height:9.8px;font-weight:500;color:#000"><span style="font-family:IPAGothic,'Liberation Mono',monospace;font-size:1.0em;letter-spacing:0px">0.0</span></span>
<span class="t" style="left:187.6px;top:672.9900000000001px;font-size:7.8px;line-height:9.8px;font-weight:500;color:#000">最大直流<span style="font-family:IPAGothic,'Liberation Mono',monospace;font-size:1.0em;letter-spacing:0px">...</span></span>
<span class="t" style="left:243px;top:672.9900000000001px;font-size:7.8px;line-height:9.8px;font-weight:500;color:#000"><span style="font-family:IPAGothic,'Liberation Mono',monospace;font-size:1.0em;letter-spacing:0px">0.0</span></span>
<span class="t" style="left:187.6px;top:683.5600000000001px;font-size:7.8px;line-height:9.8px;font-weight:500;color:#a8a8a8">波纹</span>
<div style="left:294.3px;top:280.8px;width:11px;height:412.23px;background:#f4f2ea;background-image:repeating-conic-gradient(#fff 0 25%,#e4e0d0 0 50%);background-size:2px 2px"></div>
<div style="left:294.3px;top:282px;width:11px;height:10.3px;background:#ece9d8;border:1px solid;border-color:#fff #888 #888 #fff"></div>
<svg style="left:294.3px;top:282px" width="11" height="10" viewBox="0 0 11 10" ><path d="M3 6.3 L5.5 3.5 L8 6.3z" fill="#000"/></svg>
<div style="left:294.3px;top:292.2px;width:11px;height:247.5px;background:#ece9d8;border:1px solid;border-color:#fff #888 #888 #fff"></div>
<div style="left:294.3px;top:682.73px;width:11px;height:10.3px;background:#ece9d8;border:1px solid;border-color:#fff #888 #888 #fff"></div>
<svg style="left:294.3px;top:682.73px" width="11" height="10" viewBox="0 0 11 10" ><path d="M3 3.7 L5.5 6.5 L8 3.7z" fill="#000"/></svg>
<div style="left:309.5px;top:99px;width:753px;height:18px;background:#f9f7ea"></div>
<div style="left:310.5px;top:99.6px;width:122.4px;height:15.4px;background:#f3f1e5;border-right:1px solid #555"></div>
<svg style="left:313px;top:102px" width="10" height="10" viewBox="0 0 10 10" ><rect x="0" y="0" width="10" height="10" fill="#f6f6f0"/><path d="M9.4 0.8 v8.7 h-8.6" stroke="#c4c09c" stroke-width="1" fill="none"/><path d="M6.2 1 l2 -0.6 l1 1.6" stroke="#e4e088" stroke-width="1" fill="none"/><path d="M0.8 9.5 a4.1 4.1 0 0 1 7.6 -2.2 v2.2z" fill="#141c8c"/><path d="M2.6 9 q0.8 -2.4 3.2 -3.2" stroke="#5070e8" stroke-width="0.9" fill="none"/></svg>
<span class="t" style="left:325.4px;top:102.1px;font-size:8.3px;line-height:10px;font-weight:bold;color:#111;letter-spacing:0.42px">控制组合电原理图 (逻辑图)</span>
<svg style="left:1032px;top:102px" width="30" height="10" viewBox="0 0 30 10" ><path d="M6.5 2 L3 5 L6.5 8z M12.5 2 L16 5 L12.5 8z" fill="none" stroke="#a8a020" stroke-width="0.9"/><path d="M21.3 2.2 L26.8 7.8 M26.8 2.2 L21.3 7.8" stroke="#a8a020" stroke-width="1.3"/></svg>
<div style="left:309.5px;top:116.5px;width:753px;height:357px;background:#f4f2e8;border:1px solid #d8d4c0"></div>
<div style="left:311.2px;top:117.2px;width:748.3px;height:353.8px;background:#000"></div>
<svg style="left:311.5px;top:117.5px" width="748" height="353.5" viewBox="311.5 117.5 748 353.5" ><path d="M436.7 118.1 L935.7 118.1" stroke="#2c942c" stroke-width="1.2" fill="none"/><path d="M935.7 117.5 L935.7 471.0" stroke="#2c942c" stroke-width="1.5" fill="none"/><path d="M436.7 118.0 L436.7 471.0" stroke="#d8c8c8" stroke-width="0.9" fill="none"/><path d="M451.6 124.3 L451.6 465.0" stroke="#d8c8c8" stroke-width="0.9" fill="none"/><path d="M436.7 124.3 L929.2 124.3 L929.2 465.0 L436.7 465.0" stroke="#e0d8d8" stroke-width="0.9" fill="none"/><path d="M311.5 470.3 L936.0 470.3" stroke="#b0b0b0" stroke-width="0.9" fill="none"/><path d="M436.7 127.0 L451.6 127.0" stroke="#6060d0" stroke-width="0.8" fill="none"/><path d="M436.7 129.8 L451.6 129.8" stroke="#6060d0" stroke-width="0.8" fill="none"/><path d="M436.7 132.6 L451.6 132.6" stroke="#e0b8c0" stroke-width="0.8" fill="none"/><path d="M436.7 135.4 L451.6 135.4" stroke="#e0b8c0" stroke-width="0.8" fill="none"/><path d="M436.7 138.2 L451.6 138.2" stroke="#e0b8c0" stroke-width="0.8" fill="none"/><path d="M436.7 141.0 L451.6 141.0" stroke="#e0b8c0" stroke-width="0.8" fill="none"/><path d="M436.7 253.0 L451.6 253.0" stroke="#e8c0c8" stroke-width="0.8" fill="none"/><path d="M436.7 257.9 L451.6 257.9" stroke="#e8c0c8" stroke-width="0.8" fill="none"/><path d="M436.7 262.8 L451.6 262.8" stroke="#e8c0c8" stroke-width="0.8" fill="none"/><path d="M436.7 267.8 L451.6 267.8" stroke="#e8c0c8" stroke-width="0.8" fill="none"/><path d="M436.7 272.9 L451.6 272.9" stroke="#e8c0c8" stroke-width="0.8" fill="none"/><path d="M436.7 278.0 L451.6 278.0" stroke="#e8c0c8" stroke-width="0.8" fill="none"/><path d="M436.7 283.8 L451.6 283.8" stroke="#e8c0c8" stroke-width="0.8" fill="none"/><path d="M436.7 288.3 L451.6 288.3" stroke="#e8c0c8" stroke-width="0.8" fill="none"/><path d="M436.7 293.4 L451.6 293.4" stroke="#e8c0c8" stroke-width="0.8" fill="none"/><path d="M436.7 298.6 L451.6 298.6" stroke="#e8c0c8" stroke-width="0.8" fill="none"/><path d="M436.7 427.2 L451.6 427.2" stroke="#e0c0d0" stroke-width="0.8" fill="none"/><path d="M436.7 432.3 L451.6 432.3" stroke="#e0c0d0" stroke-width="0.8" fill="none"/><path d="M436.7 437.5 L451.6 437.5" stroke="#e0c0d0" stroke-width="0.8" fill="none"/><path d="M436.7 442.6 L451.6 442.6" stroke="#e0c0d0" stroke-width="0.8" fill="none"/><path d="M436.7 447.7 L451.6 447.7" stroke="#7070d8" stroke-width="0.8" fill="none"/><path d="M436.7 452.9 L451.6 452.9" stroke="#7070d8" stroke-width="0.8" fill="none"/><path d="M436.7 458.0 L451.6 458.0" stroke="#7070d8" stroke-width="0.8" fill="none"/><path d="M436.7 463.2 L451.6 463.2" stroke="#7070d8" stroke-width="0.8" fill="none"/><path d="M439.3 197.6 L448.3 197.6" stroke="#f0d0d0" stroke-width="0.9" fill="none"/><path d="M443.8 192.6 L443.8 202.6" stroke="#f0d0d0" stroke-width="0.9" fill="none"/><path d="M439.7 356.0 L448.7 356.0" stroke="#f0d0d0" stroke-width="0.9" fill="none"/><path d="M444.2 351.0 L444.2 361.0" stroke="#f0d0d0" stroke-width="0.9" fill="none"/><path d="M517.7 310.8 L517.7 165.4 L594.3 165.4 L594.3 185.6" stroke="#c838c8" stroke-width="0.9" fill="none" stroke-dasharray="1.6 1.4"/><path d="M644.8 169.3 L644.8 272.3 L596.5 272.3 L596.5 432.0 L517.6 432.0 L517.6 381.2" stroke="#34b834" stroke-width="0.8" fill="none" stroke-dasharray="1.6 1.4"/><path d="M517.7 177.5 L573.2 177.5 L573.2 189.5 L644.0 189.5" stroke="#b4c8e8" stroke-width="0.9" fill="none"/><path d="M543.3 177.5 L543.3 183.1 L564.5 183.1 L564.5 209.7" stroke="#b4c8e8" stroke-width="0.9" fill="none"/><path d="M517.7 195.2 L558.3 195.2 L558.3 231.0" stroke="#b4c8e8" stroke-width="0.9" fill="none"/><path d="M517.7 209.7 L564.5 209.7" stroke="#b4c8e8" stroke-width="0.9" fill="none"/><path d="M517.7 225.1 L558.3 225.1" stroke="#b4c8e8" stroke-width="0.9" fill="none"/><path d="M555.3 231.5 L561.3 231.5" stroke="#f0c8c8" stroke-width="0.9" fill="none"/><path d="M556.3 233.0 L560.3 233.0" stroke="#f0c8c8" stroke-width="0.8" fill="none"/><path d="M557.3 234.5 L559.3 234.5" stroke="#f0c8c8" stroke-width="0.8" fill="none"/><circle cx="546.8" cy="195.2" r="1.7" fill="#e8d848" stroke="#fff8c0" stroke-width="0.5"/><circle cx="546.8" cy="225.1" r="1.7" fill="#e8d848" stroke="#fff8c0" stroke-width="0.5"/><path d="M548.5 175.5 L553.0 173.5 L556.0 175.8" stroke="#48d8e8" stroke-width="0.9" fill="none"/><path d="M546.5 207.2 L553.0 207.2" stroke="#48d8e8" stroke-width="0.8" fill="none"/><path d="M547.5 211.5 L552.0 211.5" stroke="#48d8e8" stroke-width="0.8" fill="none"/><path d="M595.3 177.5 L643.4 177.5" stroke="#b4c8e8" stroke-width="0.9" fill="none"/><path d="M611.0 174.5 L622.0 174.5" stroke="#48d8e8" stroke-width="1.6" fill="none"/><path d="M614.0 172.3 L619.0 172.3" stroke="#48d8e8" stroke-width="0.8" fill="none"/><path d="M644.0 201.0 L588.2 201.0 L588.2 355.4 L683.1 355.4 L683.1 378.6 L673.8 378.6" stroke="#b4c8e8" stroke-width="0.9" fill="none"/><path d="M632.8 204.5 L590.7 204.5 L590.7 364.1 L736.6 364.1" stroke="#b4c8e8" stroke-width="0.9" fill="none"/><path d="M632.8 204.5 L632.8 221.6 L602.6 221.6 L602.6 231.0" stroke="#b4c8e8" stroke-width="0.9" fill="none"/><path d="M599.6 231.5 L605.6 231.5" stroke="#f0c8c8" stroke-width="0.9" fill="none"/><path d="M600.6 233.0 L604.6 233.0" stroke="#f0c8c8" stroke-width="0.8" fill="none"/><path d="M601.6 234.5 L603.6 234.5" stroke="#f0c8c8" stroke-width="0.8" fill="none"/><circle cx="611.7" cy="221.6" r="1.7" fill="#e8d848" stroke="#fff8c0" stroke-width="0.5"/><path d="M613.5 199.6 L618.5 199.6" stroke="#48d8e8" stroke-width="1.6" fill="none"/><rect x="596.3" y="213.5" width="27.5" height="24.1" stroke="#c89858" stroke-width="0.8" fill="none" stroke-dasharray="1.6 1.2"/><rect x="514.6" y="176.5" width="1.6" height="1.6" fill="#e8e8e8"/><rect x="514.6" y="194.2" width="1.6" height="1.6" fill="#e8e8e8"/><rect x="514.6" y="208.7" width="1.6" height="1.6" fill="#e8e8e8"/><rect x="514.6" y="224.1" width="1.6" height="1.6" fill="#e8e8e8"/><rect x="645.8" y="176.3" width="1.6" height="2" fill="#e8e8e8"/><rect x="645.8" y="188.3" width="1.6" height="2" fill="#e8e8e8"/><rect x="645.8" y="199.8" width="1.6" height="2" fill="#e8e8e8"/><rect x="592.0" y="176.3" width="1.5" height="2" fill="#e8e8e8"/><rect x="531.2" y="254.9" width="18.5" height="29.9" stroke="#a8e0e0" stroke-width="0.9" fill="none"/><path d="M517.7 256.9 L577.0 256.9 L577.0 398.8" stroke="#b4c8e8" stroke-width="0.9" fill="none"/><path d="M517.7 263.6 L571.2 263.6 L571.2 393.3" stroke="#b4c8e8" stroke-width="0.9" fill="none"/><path d="M517.7 269.4 L564.7 269.4 L564.7 387.8" stroke="#b4c8e8" stroke-width="0.9" fill="none"/><path d="M533.0 258.0 L548.0 262.5" stroke="#b4c8e8" stroke-width="0.7" fill="none"/><path d="M533.0 264.5 L548.0 269.0" stroke="#b4c8e8" stroke-width="0.7" fill="none"/><path d="M533.0 270.5 L548.0 275.0" stroke="#b4c8e8" stroke-width="0.7" fill="none"/><path d="M535.6 278.0 L548.0 281.5" stroke="#b4c8e8" stroke-width="0.7" fill="none"/><path d="M526.0 278.0 L535.6 278.0" stroke="#b4c8e8" stroke-width="0.8" fill="none"/><rect x="553.6999999999999" y="273.90000000000003" width="2.4" height="2.4" fill="#50e070"/><rect x="553.6999999999999" y="279.7" width="2.4" height="2.4" fill="#50e070"/><path d="M549.7 275.1 L554.0 275.1" stroke="#b4c8e8" stroke-width="0.7" fill="none"/><path d="M549.7 280.9 L554.0 280.9" stroke="#b4c8e8" stroke-width="0.7" fill="none"/><rect x="514.0" y="255.9" width="1.6" height="1.8" fill="#e8e8e8"/><rect x="514.0" y="262.6" width="1.6" height="1.8" fill="#e8e8e8"/><rect x="514.0" y="268.4" width="1.6" height="1.8" fill="#e8e8e8"/><path d="M517.6 302.0 L546.7 302.0 L546.7 316.3" stroke="#b4c8e8" stroke-width="0.9" fill="none"/><path d="M546.7 323.0 L546.7 331.7 L534.8 331.7 L534.8 308.6 L546.7 308.6" stroke="#b4c8e8" stroke-width="0.8" fill="none"/><rect x="545.5" y="316.3" width="2.4" height="6.7" stroke="#b4c8e8" stroke-width="0.8" fill="none"/><path d="M532.0 320.0 L537.6 320.0" stroke="#d83838" stroke-width="0.9" fill="none"/><path d="M532.0 321.6 L537.6 321.6" stroke="#b4c8e8" stroke-width="0.8" fill="none"/><path d="M543.7 333.5 L549.7 333.5" stroke="#f0c8c8" stroke-width="0.9" fill="none"/><path d="M544.7 335.0 L548.7 335.0" stroke="#f0c8c8" stroke-width="0.8" fill="none"/><path d="M545.7 336.5 L547.7 336.5" stroke="#f0c8c8" stroke-width="0.8" fill="none"/><rect x="514.5" y="301.0" width="1.6" height="1.8" fill="#e8e8e8"/><path d="M562.5 321.0 L564.7 323.0 L566.9 321.0" stroke="#b4c8e8" stroke-width="0.7" fill="none"/><path d="M569.0 321.0 L571.2 323.0 L573.4 321.0" stroke="#b4c8e8" stroke-width="0.7" fill="none"/><path d="M574.8 321.0 L577.0 323.0 L579.2 321.0" stroke="#b4c8e8" stroke-width="0.7" fill="none"/><path d="M564.7 343.8 L537.4 343.8 L537.4 351.5" stroke="#b4c8e8" stroke-width="0.9" fill="none"/><rect x="534.8" y="351.5" width="5.9" height="9.9" stroke="#f0c8c8" stroke-width="0.9" fill="none"/><path d="M537.4 361.4 L537.4 366.0 L534.8 366.0 L534.8 369.1 L571.2 369.1" stroke="#b4c8e8" stroke-width="0.9" fill="none"/><rect x="537.0" y="355.5" width="1" height="1.5" fill="#fff"/><rect x="534.8" y="385.6" width="18.0" height="28.6" stroke="#a8d8d8" stroke-width="0.9" fill="none"/><path d="M517.6 387.8 L564.7 387.8" stroke="#b4c8e8" stroke-width="0.9" fill="none"/><path d="M517.6 393.3 L571.2 393.3" stroke="#b4c8e8" stroke-width="0.9" fill="none"/><path d="M517.6 398.8 L577.0 398.8" stroke="#b4c8e8" stroke-width="0.9" fill="none"/><path d="M536.0 388.5 L551.0 393.0" stroke="#b4c8e8" stroke-width="0.7" fill="none"/><path d="M536.0 394.0 L551.0 398.5" stroke="#b4c8e8" stroke-width="0.7" fill="none"/><path d="M536.0 399.5 L551.0 404.0" stroke="#b4c8e8" stroke-width="0.7" fill="none"/><path d="M538.0 408.7 L551.0 412.0" stroke="#b4c8e8" stroke-width="0.7" fill="none"/><path d="M528.6 408.7 L538.0 408.7" stroke="#b4c8e8" stroke-width="0.8" fill="none"/><rect x="527.4" y="407.5" width="2.4" height="2.4" fill="#50e070"/><rect x="557.8" y="404.7" width="2.4" height="2.4" fill="#50e070"/><rect x="557.8" y="410.8" width="2.4" height="2.4" fill="#50e070"/><path d="M552.8 405.9 L558.0 405.9" stroke="#b4c8e8" stroke-width="0.7" fill="none"/><path d="M552.8 412.0 L558.0 412.0" stroke="#b4c8e8" stroke-width="0.7" fill="none"/><rect x="513.5" y="386.8" width="1.8" height="2" fill="#f0f0f0"/><rect x="513.5" y="392.3" width="1.8" height="2" fill="#f0f0f0"/><rect x="513.5" y="397.8" width="1.8" height="2" fill="#f0f0f0"/><path d="M582.5 368.0 L582.5 402.1" stroke="#d83838" stroke-width="0.9" fill="none" stroke-dasharray="1.5 1"/><path d="M582.5 375.5 L585.5 373.5 L596.5 373.5" stroke="#b4c8e8" stroke-width="0.7" fill="none"/><path d="M582.5 381.0 L585.5 379.0 L596.5 379.0" stroke="#b4c8e8" stroke-width="0.7" fill="none"/><path d="M582.5 385.4 L585.5 383.4 L596.5 383.4" stroke="#b4c8e8" stroke-width="0.7" fill="none"/><path d="M582.5 390.9 L585.5 388.9 L596.5 388.9" stroke="#b4c8e8" stroke-width="0.7" fill="none"/><path d="M582.5 395.3 L585.5 393.3 L596.5 393.3" stroke="#b4c8e8" stroke-width="0.7" fill="none"/><path d="M596.5 373.2 L626.2 373.2" stroke="#b4c8e8" stroke-width="0.9" fill="none"/><rect x="600.0" y="370.8" width="4.5" height="2" fill="#fff"/><path d="M596.5 378.6 L626.2 378.6" stroke="#b4c8e8" stroke-width="0.9" fill="none"/><rect x="600.0" y="376.2" width="4.5" height="2" fill="#fff"/><path d="M596.5 383.9 L626.2 383.9" stroke="#b4c8e8" stroke-width="0.9" fill="none"/><rect x="600.0" y="381.5" width="4.5" height="2" fill="#fff"/><circle cx="598" cy="393.5" r="1.2" fill="none" stroke="#e0e0e0" stroke-width="0.6"/><rect x="626.2" y="370.2" width="47.6" height="41.7" stroke="#ffffb0" stroke-width="0.5" fill="#ffffa8"/><path d="M628.5 373.2 L638.5 373.2" stroke="#707050" stroke-width="0.9" fill="none" stroke-dasharray="1.2 0.8"/><path d="M628.5 378.6 L638.5 378.6" stroke="#707050" stroke-width="0.9" fill="none" stroke-dasharray="1.2 0.8"/><path d="M628.5 383.9 L637.5 383.9" stroke="#707050" stroke-width="0.9" fill="none" stroke-dasharray="1.2 0.8"/><path d="M628.5 390.0 L650.5 390.0" stroke="#707050" stroke-width="0.9" fill="none" stroke-dasharray="1.2 0.8"/><path d="M628.5 395.0 L654.5 395.0" stroke="#707050" stroke-width="0.9" fill="none" stroke-dasharray="1.2 0.8"/><path d="M628.5 402.9 L636.5 402.9" stroke="#707050" stroke-width="0.9" fill="none" stroke-dasharray="1.2 0.8"/><path d="M628.5 408.9 L633.5 408.9" stroke="#707050" stroke-width="0.9" fill="none" stroke-dasharray="1.2 0.8"/><path d="M666.0 373.2 L672.0 373.2" stroke="#404030" stroke-width="0.9" fill="none" stroke-dasharray="1.2 0.6"/><path d="M668.0 378.6 L672.0 378.6" stroke="#404030" stroke-width="0.9" fill="none" stroke-dasharray="1.2 0.6"/><path d="M668.0 383.9 L672.0 383.9" stroke="#404030" stroke-width="0.9" fill="none" stroke-dasharray="1.2 0.6"/><path d="M664.0 390.0 L672.0 390.0" stroke="#404030" stroke-width="0.9" fill="none" stroke-dasharray="1.2 0.6"/><path d="M666.0 397.0 L672.0 397.0" stroke="#404030" stroke-width="0.9" fill="none" stroke-dasharray="1.2 0.6"/><path d="M666.0 403.3 L672.0 403.3" stroke="#404030" stroke-width="0.9" fill="none" stroke-dasharray="1.2 0.6"/><path d="M668.0 409.3 L672.0 409.3" stroke="#404030" stroke-width="0.9" fill="none" stroke-dasharray="1.2 0.6"/><path d="M626.2 393.4 L614.7 393.4 L614.7 405.3 L608.7 405.3 L608.7 408.5" stroke="#b4c8e8" stroke-width="0.9" fill="none"/><path d="M605.0 408.8 L611.5 408.8" stroke="#f0c8c8" stroke-width="0.9" fill="none"/><path d="M604.5 411.0 L606.0 409.0" stroke="#f0c8c8" stroke-width="0.7" fill="none"/><path d="M607.5 411.0 L609.0 409.0" stroke="#f0c8c8" stroke-width="0.7" fill="none"/><path d="M610.5 411.0 L612.0 409.0" stroke="#f0c8c8" stroke-width="0.7" fill="none"/><rect x="617.0999999999999" y="401.7" width="2.4" height="2.4" fill="#50e070"/><rect x="617.0999999999999" y="407.7" width="2.4" height="2.4" fill="#50e070"/><path d="M619.5 402.9 L626.2 402.9" stroke="#b4c8e8" stroke-width="0.7" fill="none"/><path d="M619.5 408.9 L626.2 408.9" stroke="#b4c8e8" stroke-width="0.7" fill="none"/><path d="M673.8 373.2 L694.6 373.2 L694.6 377.0" stroke="#b4c8e8" stroke-width="0.9" fill="none"/><path d="M691.6 377.6 L697.6 377.6" stroke="#f0c8c8" stroke-width="0.9" fill="none"/><path d="M692.6 379.1 L696.6 379.1" stroke="#f0c8c8" stroke-width="0.8" fill="none"/><path d="M693.6 380.6 L695.6 380.6" stroke="#f0c8c8" stroke-width="0.8" fill="none"/><rect x="681.9" y="383.90000000000003" width="2.4" height="2.4" fill="#50e070"/><rect x="681.9" y="395.8" width="2.4" height="2.4" fill="#50e070"/><path d="M673.8 385.1 L682.0 385.1" stroke="#b4c8e8" stroke-width="0.7" fill="none"/><path d="M673.8 397.0 L682.0 397.0" stroke="#b4c8e8" stroke-width="0.7" fill="none"/><path d="M673.8 391.0 L680.0 391.0" stroke="#b4c8e8" stroke-width="0.7" fill="none"/><path d="M673.8 403.3 L718.8 403.3 L718.8 387.5 L736.6 387.5" stroke="#b4c8e8" stroke-width="0.9" fill="none"/><path d="M673.8 409.3 L736.6 409.3" stroke="#b4c8e8" stroke-width="0.9" fill="none"/><path d="M706.5 364.1 L706.5 409.3" stroke="#b4c8e8" stroke-width="0.9" fill="none"/><path d="M688.6 403.3 L688.6 418.2" stroke="#b4c8e8" stroke-width="0.9" fill="none"/><path d="M683.8 419.5 L689.8 419.5" stroke="#f0c8c8" stroke-width="0.9" fill="none"/><path d="M684.8 421.0 L688.8 421.0" stroke="#f0c8c8" stroke-width="0.8" fill="none"/><path d="M685.8 422.5 L687.8 422.5" stroke="#f0c8c8" stroke-width="0.8" fill="none"/><rect x="736.6" y="361.1" width="17.8" height="29.9" stroke="#ffffb0" stroke-width="0.5" fill="#ffffa8"/><path d="M742.0 375.5 L747.0 375.5" stroke="#808060" stroke-width="0.7" fill="none" stroke-dasharray="1 0.8"/><path d="M736.6 370.6 L719.3 370.6 L719.3 375.8" stroke="#b4c8e8" stroke-width="0.9" fill="none"/><path d="M719.3 378.6 L719.3 382.5 L736.6 382.5" stroke="#b4c8e8" stroke-width="0.9" fill="none"/><path d="M716.3 376.2 L722.3 376.2" stroke="#f0c8c8" stroke-width="1" fill="none"/><path d="M716.3 378.2 L722.3 378.2" stroke="#f0c8c8" stroke-width="1" fill="none"/><path d="M754.4 367.1 L771.3 367.1" stroke="#f0c8c8" stroke-width="0.8" fill="none"/><rect x="771.3" y="366.1" width="11.9" height="2.0" stroke="#f0c8c8" stroke-width="0.8" fill="none"/><path d="M783.8 367.1 L783.8 387.5" stroke="#b4c8e8" stroke-width="0.9" fill="none"/><path d="M754.4 385.1 L783.8 385.1" stroke="#f0c8c8" stroke-width="0.8" fill="none"/><path d="M781.5 389.0 L789.0 389.0" stroke="#f0c8c8" stroke-width="0.9" fill="none"/><path d="M781.0 391.3 L782.5 389.3" stroke="#f0c8c8" stroke-width="0.7" fill="none"/><path d="M784.0 391.3 L785.5 389.3" stroke="#f0c8c8" stroke-width="0.7" fill="none"/><path d="M787.0 391.3 L788.5 389.3" stroke="#f0c8c8" stroke-width="0.7" fill="none"/><path d="M783.8 387.5 L785.5 389.0" stroke="#b4c8e8" stroke-width="0.7" fill="none"/><rect x="736.6" y="403.3" width="18.2" height="11.5" stroke="#f0c8c8" stroke-width="0.9" fill="none"/><ellipse cx="743.2" cy="409.2" rx="2.3" ry="1.6" fill="none" stroke="#e8e8e8" stroke-width="0.7"/><ellipse cx="748.4" cy="409.2" rx="2.3" ry="1.6" fill="none" stroke="#e8e8e8" stroke-width="0.7"/><path d="M754.8 409.3 L769.3 409.3 L769.3 416.2" stroke="#b4c8e8" stroke-width="0.9" fill="none"/><path d="M766.3 416.8 L772.3 416.8" stroke="#f0c8c8" stroke-width="0.9" fill="none"/><path d="M767.3 418.3 L771.3 418.3" stroke="#f0c8c8" stroke-width="0.8" fill="none"/><path d="M768.3 419.8 L770.3 419.8" stroke="#f0c8c8" stroke-width="0.8" fill="none"/><path d="M647.4 290.3 L673.7 290.3" stroke="#ffffff" stroke-width="1.1" fill="none"/><path d="M673.7 290.3 L673.7 278.0 L730.5 278.0" stroke="#ffffff" stroke-width="1.1" fill="none"/><path d="M650.8 291.0 L650.8 333.6" stroke="#b4c8e8" stroke-width="0.9" fill="none"/><circle cx="650.8" cy="317" r="1.7" fill="#e8d848" stroke="#fff8c0" stroke-width="0.5"/><rect x="650.2" y="293.5" width="1.4" height="1.2" fill="#d8d8d8"/><path d="M658.9 291.0 L658.9 333.6" stroke="#b4c8e8" stroke-width="0.9" fill="none"/><circle cx="658.9" cy="317" r="1.7" fill="#e8d848" stroke="#fff8c0" stroke-width="0.5"/><rect x="658.3" y="293.5" width="1.4" height="1.2" fill="#d8d8d8"/><path d="M667.7 291.0 L667.7 333.6" stroke="#b4c8e8" stroke-width="0.9" fill="none"/><circle cx="667.7" cy="317" r="1.7" fill="#e8d848" stroke="#fff8c0" stroke-width="0.5"/><rect x="667.1" y="293.5" width="1.4" height="1.2" fill="#d8d8d8"/><path d="M650.8 333.6 L667.7 333.6 L670.8 336.5" stroke="#b4c8e8" stroke-width="0.9" fill="none"/><path d="M667.8 337.5 L673.8 337.5" stroke="#f0c8c8" stroke-width="0.9" fill="none"/><path d="M668.8 339.0 L672.8 339.0" stroke="#f0c8c8" stroke-width="0.8" fill="none"/><path d="M669.8 340.5 L671.8 340.5" stroke="#f0c8c8" stroke-width="0.8" fill="none"/><rect x="709.3" y="168.3" width="101.7" height="80.3" stroke="#f0c8c8" stroke-width="0.9" fill="none"/><rect x="718.0" y="180.2" width="86.6" height="12.2" stroke="#f0c8c8" stroke-width="0.9" fill="none"/><path d="M731.5 186.3 L749.0 186.3" stroke="#e8e0e0" stroke-width="0.9" fill="none" stroke-dasharray="2 0.8"/><path d="M758.5 186.0 L764.5 186.0" stroke="#d8c8c8" stroke-width="0.8" fill="none" stroke-dasharray="1 0.6"/><path d="M781.5 186.8 L790.5 186.8" stroke="#d0c8c8" stroke-width="0.7" fill="none" stroke-dasharray="1 1"/><rect x="718.0" y="201.0" width="86.6" height="12.2" stroke="#f0c8c8" stroke-width="0.9" fill="none"/><path d="M731.5 207.1 L749.0 207.1" stroke="#e8e0e0" stroke-width="0.9" fill="none" stroke-dasharray="2 0.8"/><path d="M758.5 206.8 L764.5 206.8" stroke="#d8c8c8" stroke-width="0.8" fill="none" stroke-dasharray="1 0.6"/><path d="M781.5 207.6 L790.5 207.6" stroke="#d0c8c8" stroke-width="0.7" fill="none" stroke-dasharray="1 1"/><rect x="718.0" y="221.6" width="86.6" height="12.2" stroke="#f0c8c8" stroke-width="0.9" fill="none"/><path d="M731.5 227.7 L749.0 227.7" stroke="#e8e0e0" stroke-width="0.9" fill="none" stroke-dasharray="2 0.8"/><path d="M758.5 227.4 L764.5 227.4" stroke="#d8c8c8" stroke-width="0.8" fill="none" stroke-dasharray="1 0.6"/><path d="M781.5 228.2 L790.5 228.2" stroke="#d0c8c8" stroke-width="0.7" fill="none" stroke-dasharray="1 1"/><path d="M742.0 174.2 L760.5 174.2" stroke="#e8e0e0" stroke-width="0.9" fill="none" stroke-dasharray="2 1"/><path d="M771.0 174.2 L775.0 174.2" stroke="#e8e0e0" stroke-width="0.9" fill="none" stroke-dasharray="1.4 0.8"/><rect x="716.8" y="244.0" width="1.2" height="1.8" fill="#f0f0f0"/><rect x="722.9" y="244.0" width="1.2" height="1.8" fill="#f0f0f0"/><rect x="729.3" y="244.0" width="1.2" height="1.8" fill="#f0f0f0"/><rect x="752.8" y="244.0" width="1.2" height="1.8" fill="#f0f0f0"/><rect x="758.8" y="244.0" width="1.2" height="1.8" fill="#f0f0f0"/><rect x="764.8" y="244.0" width="1.2" height="1.8" fill="#f0f0f0"/><rect x="770.7" y="244.0" width="1.2" height="1.8" fill="#f0f0f0"/><rect x="776.7" y="244.0" width="1.2" height="1.8" fill="#f0f0f0"/><rect x="782.6" y="244.0" width="1.2" height="1.8" fill="#f0f0f0"/><rect x="788.6" y="244.0" width="1.2" height="1.8" fill="#f0f0f0"/><rect x="794.4" y="244.0" width="1.2" height="1.8" fill="#f0f0f0"/><rect x="800.1" y="244.0" width="1.2" height="1.8" fill="#f0f0f0"/><path d="M718.0 249.4 L718.0 274.5 L715.5 277.8" stroke="#b4c8e8" stroke-width="1" fill="none"/><path d="M724.1 249.4 L724.1 274.5 L721.6 277.8" stroke="#b4c8e8" stroke-width="1" fill="none"/><path d="M730.5 249.4 L730.5 274.5 L728.0 277.8" stroke="#b4c8e8" stroke-width="1" fill="none"/><path d="M712.0 249.6 L733.0 249.6" stroke="#e87878" stroke-width="0.9" fill="none" stroke-dasharray="1.5 0.8"/><path d="M754.0 249.4 L754.0 278.5 L751.5 281.5" stroke="#b4c8e8" stroke-width="1" fill="none"/><path d="M760.0 249.4 L760.0 278.5 L757.5 281.5" stroke="#b4c8e8" stroke-width="1" fill="none"/><path d="M766.0 249.4 L766.0 278.5 L763.5 281.5" stroke="#b4c8e8" stroke-width="1" fill="none"/><path d="M771.9 249.4 L771.9 278.5 L769.4 281.5" stroke="#b4c8e8" stroke-width="1" fill="none"/><path d="M777.9 249.4 L777.9 278.5 L775.4 281.5" stroke="#b4c8e8" stroke-width="1" fill="none"/><path d="M783.8 249.4 L783.8 278.5 L781.3 281.5" stroke="#b4c8e8" stroke-width="1" fill="none"/><path d="M789.8 249.4 L789.8 278.5 L787.3 281.5" stroke="#b4c8e8" stroke-width="1" fill="none"/><path d="M795.6 249.4 L795.6 278.5 L793.1 281.5" stroke="#b4c8e8" stroke-width="1" fill="none"/><path d="M801.3 249.4 L801.3 278.5 L798.8 281.5" stroke="#b4c8e8" stroke-width="1" fill="none"/><path d="M748.0 250.0 L806.0 250.0" stroke="#c8c0c0" stroke-width="0.7" fill="none" stroke-dasharray="1.5 1.2"/><path d="M804.6 281.5 L742.3 281.5 L742.3 304.6 L689.6 304.6" stroke="#ffffff" stroke-width="1.1" fill="none"/><path d="M732.0 281.3 L738.0 281.3" stroke="#c0c0c0" stroke-width="0.6" fill="none"/><path d="M689.6 305.0 L689.6 324.5" stroke="#b4c8e8" stroke-width="0.9" fill="none"/><path d="M688.1 308.0 L689.6 306.0 L691.1 308.0" stroke="#b4c8e8" stroke-width="0.6" fill="none"/><rect x="687.4" y="318.5" width="1.2" height="1.5" fill="#e0e0e0"/><path d="M695.7 305.0 L695.7 324.5" stroke="#b4c8e8" stroke-width="0.9" fill="none"/><path d="M694.2 308.0 L695.7 306.0 L697.2 308.0" stroke="#b4c8e8" stroke-width="0.6" fill="none"/><rect x="693.5" y="318.5" width="1.2" height="1.5" fill="#e0e0e0"/><path d="M701.6 305.0 L701.6 324.5" stroke="#b4c8e8" stroke-width="0.9" fill="none"/><path d="M700.1 308.0 L701.6 306.0 L703.1 308.0" stroke="#b4c8e8" stroke-width="0.6" fill="none"/><rect x="699.4" y="318.5" width="1.2" height="1.5" fill="#e0e0e0"/><path d="M707.4 305.0 L707.4 324.5" stroke="#b4c8e8" stroke-width="0.9" fill="none"/><path d="M705.9 308.0 L707.4 306.0 L708.9 308.0" stroke="#b4c8e8" stroke-width="0.6" fill="none"/><rect x="705.2" y="318.5" width="1.2" height="1.5" fill="#e0e0e0"/><path d="M713.2 305.0 L713.2 324.5" stroke="#b4c8e8" stroke-width="0.9" fill="none"/><path d="M711.7 308.0 L713.2 306.0 L714.7 308.0" stroke="#b4c8e8" stroke-width="0.6" fill="none"/><rect x="711.0" y="318.5" width="1.2" height="1.5" fill="#e0e0e0"/><path d="M719.4 305.0 L719.4 324.5" stroke="#b4c8e8" stroke-width="0.9" fill="none"/><path d="M717.9 308.0 L719.4 306.0 L720.9 308.0" stroke="#b4c8e8" stroke-width="0.6" fill="none"/><rect x="717.2" y="318.5" width="1.2" height="1.5" fill="#e0e0e0"/><path d="M725.2 305.0 L725.2 324.5" stroke="#b4c8e8" stroke-width="0.9" fill="none"/><path d="M723.7 308.0 L725.2 306.0 L726.7 308.0" stroke="#b4c8e8" stroke-width="0.6" fill="none"/><rect x="723.0" y="318.5" width="1.2" height="1.5" fill="#e0e0e0"/><path d="M730.7 305.0 L730.7 324.5" stroke="#b4c8e8" stroke-width="0.9" fill="none"/><path d="M729.2 308.0 L730.7 306.0 L732.2 308.0" stroke="#b4c8e8" stroke-width="0.6" fill="none"/><rect x="728.5" y="318.5" width="1.2" height="1.5" fill="#e0e0e0"/><path d="M736.5 305.0 L736.5 324.5" stroke="#b4c8e8" stroke-width="0.9" fill="none"/><path d="M735.0 308.0 L736.5 306.0 L738.0 308.0" stroke="#b4c8e8" stroke-width="0.6" fill="none"/><rect x="734.3" y="318.5" width="1.2" height="1.5" fill="#e0e0e0"/><path d="M741.6 305.0 L741.6 324.5" stroke="#b4c8e8" stroke-width="0.9" fill="none"/><path d="M740.1 308.0 L741.6 306.0 L743.1 308.0" stroke="#b4c8e8" stroke-width="0.6" fill="none"/><rect x="739.4" y="318.5" width="1.2" height="1.5" fill="#e0e0e0"/><path d="M686.0 325.0 L742.0 325.0" stroke="#e07070" stroke-width="0.8" fill="none" stroke-dasharray="1.2 1"/><rect x="683.4" y="326.2" width="59.2" height="19.8" stroke="#f0c8c8" stroke-width="0.9" fill="none"/><path d="M710.0 331.5 L717.0 331.5" stroke="#e0d0d0" stroke-width="0.7" fill="none" stroke-dasharray="1 0.7"/><path d="M711.5 333.7 L715.5 333.7" stroke="#e0d0d0" stroke-width="0.7" fill="none" stroke-dasharray="1 0.7"/><path d="M707.5 339.5 L719.5 339.5" stroke="#e0d0d0" stroke-width="0.7" fill="none" stroke-dasharray="1.3 0.7"/><rect x="822.1" y="432.3" width="107.1" height="32.7" stroke="#38b838" stroke-width="0.9" fill="none"/><path d="M827.9 432.3 L827.9 465.0" stroke="#e8e8e8" stroke-width="0.8" fill="none"/><path d="M846.7 432.3 L846.7 465.0" stroke="#e8e8e8" stroke-width="0.8" fill="none"/><path d="M851.9 432.3 L851.9 465.0" stroke="#6060d0" stroke-width="0.8" fill="none"/><path d="M870.0 432.3 L870.0 465.0" stroke="#e0c0c0" stroke-width="0.9" fill="none"/><path d="M899.1 432.3 L899.1 465.0" stroke="#38b838" stroke-width="0.9" fill="none"/><path d="M822.1 437.5 L870.0 437.5" stroke="#e0e0e0" stroke-width="0.8" fill="none"/><path d="M822.1 439.9 L870.0 439.9" stroke="#38b838" stroke-width="0.8" fill="none"/><path d="M822.1 444.3 L870.0 444.3" stroke="#38b838" stroke-width="0.8" fill="none"/><path d="M822.1 448.8 L870.0 448.8" stroke="#38b838" stroke-width="0.8" fill="none"/><path d="M822.1 453.6 L870.0 453.6" stroke="#e8e8e8" stroke-width="0.8" fill="none"/><path d="M822.1 458.0 L870.0 458.0" stroke="#6868e0" stroke-width="0.8" fill="none"/><path d="M822.1 462.5 L870.0 462.5" stroke="#6868e0" stroke-width="0.8" fill="none"/><path d="M870.0 439.9 L929.2 439.9" stroke="#38b838" stroke-width="0.8" fill="none"/><path d="M870.0 453.6 L929.2 453.6" stroke="#e0d0d0" stroke-width="0.8" fill="none"/><path d="M873.4 454.6 L873.4 460.8" stroke="#ffffff" stroke-width="1" fill="none"/><path d="M877.2 454.6 L877.2 460.8" stroke="#ffffff" stroke-width="1" fill="none"/><path d="M881.1 454.6 L881.1 460.8" stroke="#ffffff" stroke-width="1" fill="none"/><path d="M885.0 454.6 L885.0 460.8" stroke="#ffffff" stroke-width="1" fill="none"/><path d="M888.8 454.6 L888.8 460.8" stroke="#ffffff" stroke-width="1" fill="none"/><path d="M880.0 445.0 L886.0 445.0" stroke="#e0e0e0" stroke-width="0.7" fill="none" stroke-dasharray="1 0.6"/><path d="M908.0 445.0 L914.0 445.0" stroke="#e0e0e0" stroke-width="0.7" fill="none" stroke-dasharray="1 0.6"/><rect x="909.0" y="467.5" width="1" height="1" fill="#5050c0"/><rect x="920.0" y="467.5" width="1" height="1" fill="#5050c0"/></svg>
<span class="t" style="left:637px;top:386.5px;font-size:5.5px;line-height:7px;color:#8890a0">开关电源</span>
<div style="left:309.5px;top:477.5px;width:753px;height:12px;background:#ece9d8;border-top:1px solid #f8f7f0;border-bottom:1px solid #c8c4b0"></div>
<span class="t" style="left:311px;top:478.7px;font-size:8px;line-height:10px;font-weight:500;">导线表</span>
<svg style="left:1054.5px;top:480.5px" width="6" height="6" viewBox="0 0 6 6" ><path d="M0.8 0.8 L5.2 5.2 M5.2 0.8 L0.8 5.2" stroke="#000" stroke-width="1.3"/></svg>
<div style="left:309.5px;top:490.5px;width:753.5px;height:60.10000000000002px;background:#fff;border:1px solid #6c6a60;border-right-color:#222;border-bottom:1.3px solid #111;overflow:hidden"></div>
<div style="left:310.3px;top:491.3px;width:741.5px;height:10.5px;background:linear-gradient(#f1efe4,#ebe8d8 80%,#dfdccc);border-bottom:1px solid #cac6b4"></div>
<svg style="left:0px;top:0px" width="1110" height="727" viewBox="0 0 1110 727" ><line x1="310" y1="508.6" x2="1051.5" y2="508.6" stroke="#eae8e0" stroke-width="0.8"/><line x1="310" y1="517.2" x2="1051.5" y2="517.2" stroke="#eae8e0" stroke-width="0.8"/><line x1="310" y1="525.8" x2="1051.5" y2="525.8" stroke="#eae8e0" stroke-width="0.8"/><line x1="310" y1="534.4" x2="1051.5" y2="534.4" stroke="#eae8e0" stroke-width="0.8"/><line x1="310" y1="543.0" x2="1051.5" y2="543.0" stroke="#eae8e0" stroke-width="0.8"/><line x1="335" y1="492.5" x2="335" y2="501.0" stroke="#b8b4a0" stroke-width="0.9"/><line x1="335.8" y1="492.5" x2="335.8" y2="501.0" stroke="#fff" stroke-width="0.7"/><line x1="335" y1="502.0" x2="335" y2="549.1" stroke="#e4e2da" stroke-width="0.8"/><line x1="388.3" y1="492.5" x2="388.3" y2="501.0" stroke="#b8b4a0" stroke-width="0.9"/><line x1="389.1" y1="492.5" x2="389.1" y2="501.0" stroke="#fff" stroke-width="0.7"/><line x1="388.3" y1="502.0" x2="388.3" y2="549.1" stroke="#e4e2da" stroke-width="0.8"/><line x1="454.2" y1="492.5" x2="454.2" y2="501.0" stroke="#b8b4a0" stroke-width="0.9"/><line x1="455.0" y1="492.5" x2="455.0" y2="501.0" stroke="#fff" stroke-width="0.7"/><line x1="454.2" y1="502.0" x2="454.2" y2="549.1" stroke="#e4e2da" stroke-width="0.8"/><line x1="519.8" y1="492.5" x2="519.8" y2="501.0" stroke="#b8b4a0" stroke-width="0.9"/><line x1="520.5999999999999" y1="492.5" x2="520.5999999999999" y2="501.0" stroke="#fff" stroke-width="0.7"/><line x1="519.8" y1="502.0" x2="519.8" y2="549.1" stroke="#e4e2da" stroke-width="0.8"/><line x1="585.4" y1="492.5" x2="585.4" y2="501.0" stroke="#b8b4a0" stroke-width="0.9"/><line x1="586.1999999999999" y1="492.5" x2="586.1999999999999" y2="501.0" stroke="#fff" stroke-width="0.7"/><line x1="585.4" y1="502.0" x2="585.4" y2="549.1" stroke="#e4e2da" stroke-width="0.8"/><line x1="651.4" y1="492.5" x2="651.4" y2="501.0" stroke="#b8b4a0" stroke-width="0.9"/><line x1="652.1999999999999" y1="492.5" x2="652.1999999999999" y2="501.0" stroke="#fff" stroke-width="0.7"/><line x1="651.4" y1="502.0" x2="651.4" y2="549.1" stroke="#e4e2da" stroke-width="0.8"/><line x1="704.4" y1="492.5" x2="704.4" y2="501.0" stroke="#b8b4a0" stroke-width="0.9"/><line x1="705.1999999999999" y1="492.5" x2="705.1999999999999" y2="501.0" stroke="#fff" stroke-width="0.7"/><line x1="704.4" y1="502.0" x2="704.4" y2="549.1" stroke="#e4e2da" stroke-width="0.8"/></svg>
<span class="t" style="left:312.0px;top:492.1px;font-size:7.8px;line-height:10px;color:#111">序号</span>
<span class="t" style="left:337.6px;top:492.1px;font-size:7.8px;line-height:10px;color:#111">导线号</span>
<span class="t" style="left:390.90000000000003px;top:492.1px;font-size:7.8px;line-height:10px;color:#111">连接点<span style="font-family:IPAGothic,'Liberation Mono',monospace;font-size:1.0em;letter-spacing:0px">I</span>项目代号</span>
<span class="t" style="left:456.8px;top:492.1px;font-size:7.8px;line-height:10px;color:#111">连接点<span style="font-family:IPAGothic,'Liberation Mono',monospace;font-size:1.0em;letter-spacing:0px">I</span>端子号</span>
<span class="t" style="left:522.4px;top:492.1px;font-size:7.8px;line-height:10px;color:#111">连接点<span style="font-family:IPAGothic,'Liberation Mono',monospace;font-size:1.0em;letter-spacing:0px">II</span>项目<span style="font-family:IPAGothic,'Liberation Mono',monospace;font-size:1.0em;letter-spacing:0px">...</span></span>
<span class="t" style="left:588.0px;top:492.1px;font-size:7.8px;line-height:10px;color:#111">连接点<span style="font-family:IPAGothic,'Liberation Mono',monospace;font-size:1.0em;letter-spacing:0px">II</span>端子号</span>
<span class="t" style="left:654.0px;top:492.1px;font-size:7.8px;line-height:10px;color:#111">路线标识</span>
<div style="left:1051.7px;top:491.5px;width:10px;height:57.800000000000026px;background:linear-gradient(90deg,#f0efe8,#fdfdfb)"></div>
<div style="left:1052.0px;top:491.8px;width:9.4px;height:9.4px;background:linear-gradient(135deg,#d4e0fc,#b4c8f4);border:1px solid #f0f4ff;border-radius:2px;box-shadow:0 0 0 0.5px #98b0e8"></div>
<svg style="left:1052.0px;top:491.8px" width="9.4" height="9.4" viewBox="0 0 9.4 9.4" ><path d="M2.2 6.2 L4.7 3.2 L7.2 6.2" stroke="#3858a8" stroke-width="1.5" fill="none"/></svg>
<div style="left:1052.0px;top:539.6px;width:9.4px;height:9.4px;background:linear-gradient(135deg,#d4e0fc,#b4c8f4);border:1px solid #f0f4ff;border-radius:2px;box-shadow:0 0 0 0.5px #98b0e8"></div>
<svg style="left:1052.0px;top:539.6px" width="9.4" height="9.4" viewBox="0 0 9.4 9.4" ><path d="M2.2 3.2 L4.7 6.2 L7.2 3.2" stroke="#3858a8" stroke-width="1.5" fill="none"/></svg>
<div style="left:1052.0px;top:502.1px;width:9.4px;height:6px;background:#c0d0f8;border:1px solid #f0f4ff;border-radius:1.5px;box-shadow:0 0 0 0.5px #98b0e8"></div>
<div style="left:309.5px;top:490.5px;width:742px;height:59.10000000000002px;overflow:hidden">
<span class="t" style="left:2.8000000000000114px;top:13.4px;font-size:7.9px;line-height:9.6px;color:#181818"><span style="font-family:IPAGothic,'Liberation Mono',monospace;font-size:1.0em;letter-spacing:0px">1</span></span>
<span class="t" style="left:30.100000000000023px;top:13.4px;font-size:7.9px;line-height:9.6px;color:#181818"><span style="font-family:IPAGothic,'Liberation Mono',monospace;font-size:1.0em;letter-spacing:0px">_n4</span></span>
<span class="t" style="left:81.69999999999999px;top:13.4px;font-size:7.9px;line-height:9.6px;color:#181818"><span style="font-family:IPAGothic,'Liberation Mono',monospace;font-size:1.0em;letter-spacing:0px">X100</span></span>
<span class="t" style="left:149.10000000000002px;top:13.4px;font-size:7.9px;line-height:9.6px;color:#181818"><span style="font-family:IPAGothic,'Liberation Mono',monospace;font-size:1.0em;letter-spacing:0px">1</span></span>
<span class="t" style="left:213.89999999999998px;top:13.4px;font-size:7.9px;line-height:9.6px;color:#181818"><span style="font-family:IPAGothic,'Liberation Mono',monospace;font-size:1.0em;letter-spacing:0px">X2</span></span>
<span class="t" style="left:280.5px;top:13.4px;font-size:7.9px;line-height:9.6px;color:#181818"><span style="font-family:IPAGothic,'Liberation Mono',monospace;font-size:1.0em;letter-spacing:0px">1</span></span>
<span class="t" style="left:2.8000000000000114px;top:22.100000000000044px;font-size:7.9px;line-height:9.6px;color:#181818"><span style="font-family:IPAGothic,'Liberation Mono',monospace;font-size:1.0em;letter-spacing:0px">2</span></span>
<span class="t" style="left:30.100000000000023px;top:22.100000000000044px;font-size:7.9px;line-height:9.6px;color:#181818"><span style="font-family:IPAGothic,'Liberation Mono',monospace;font-size:1.0em;letter-spacing:0px">_n4</span></span>
<span class="t" style="left:81.69999999999999px;top:22.100000000000044px;font-size:7.9px;line-height:9.6px;color:#181818"><span style="font-family:IPAGothic,'Liberation Mono',monospace;font-size:1.0em;letter-spacing:0px">X100</span></span>
<span class="t" style="left:149.10000000000002px;top:22.100000000000044px;font-size:7.9px;line-height:9.6px;color:#181818"><span style="font-family:IPAGothic,'Liberation Mono',monospace;font-size:1.0em;letter-spacing:0px">2</span></span>
<span class="t" style="left:213.89999999999998px;top:22.100000000000044px;font-size:7.9px;line-height:9.6px;color:#181818"><span style="font-family:IPAGothic,'Liberation Mono',monospace;font-size:1.0em;letter-spacing:0px">X2</span></span>
<span class="t" style="left:280.5px;top:22.100000000000044px;font-size:7.9px;line-height:9.6px;color:#181818"><span style="font-family:IPAGothic,'Liberation Mono',monospace;font-size:1.0em;letter-spacing:0px">2</span></span>
<span class="t" style="left:2.8000000000000114px;top:30.699999999999953px;font-size:7.9px;line-height:9.6px;color:#181818"><span style="font-family:IPAGothic,'Liberation Mono',monospace;font-size:1.0em;letter-spacing:0px">3</span></span>
<span class="t" style="left:30.100000000000023px;top:30.699999999999953px;font-size:7.9px;line-height:9.6px;color:#181818"><span style="font-family:IPAGothic,'Liberation Mono',monospace;font-size:1.0em;letter-spacing:0px">_n4</span></span>
<span class="t" style="left:81.69999999999999px;top:30.699999999999953px;font-size:7.9px;line-height:9.6px;color:#181818"><span style="font-family:IPAGothic,'Liberation Mono',monospace;font-size:1.0em;letter-spacing:0px">X100</span></span>
<span class="t" style="left:149.10000000000002px;top:30.699999999999953px;font-size:7.9px;line-height:9.6px;color:#181818"><span style="font-family:IPAGothic,'Liberation Mono',monospace;font-size:1.0em;letter-spacing:0px">3</span></span>
<span class="t" style="left:213.89999999999998px;top:30.699999999999953px;font-size:7.9px;line-height:9.6px;color:#181818"><span style="font-family:IPAGothic,'Liberation Mono',monospace;font-size:1.0em;letter-spacing:0px">X2</span></span>
<span class="t" style="left:280.5px;top:30.699999999999953px;font-size:7.9px;line-height:9.6px;color:#181818"><span style="font-family:IPAGothic,'Liberation Mono',monospace;font-size:1.0em;letter-spacing:0px">3</span></span>
<span class="t" style="left:2.8000000000000114px;top:39.4px;font-size:7.9px;line-height:9.6px;color:#181818"><span style="font-family:IPAGothic,'Liberation Mono',monospace;font-size:1.0em;letter-spacing:0px">4</span></span>
<span class="t" style="left:30.100000000000023px;top:39.4px;font-size:7.9px;line-height:9.6px;color:#181818"><span style="font-family:IPAGothic,'Liberation Mono',monospace;font-size:1.0em;letter-spacing:0px">_n4</span></span>
<span class="t" style="left:81.69999999999999px;top:39.4px;font-size:7.9px;line-height:9.6px;color:#181818"><span style="font-family:IPAGothic,'Liberation Mono',monospace;font-size:1.0em;letter-spacing:0px">X100</span></span>
<span class="t" style="left:149.10000000000002px;top:39.4px;font-size:7.9px;line-height:9.6px;color:#181818"><span style="font-family:IPAGothic,'Liberation Mono',monospace;font-size:1.0em;letter-spacing:0px">4</span></span>
<span class="t" style="left:213.89999999999998px;top:39.4px;font-size:7.9px;line-height:9.6px;color:#181818"><span style="font-family:IPAGothic,'Liberation Mono',monospace;font-size:1.0em;letter-spacing:0px">X2</span></span>
<span class="t" style="left:280.5px;top:39.4px;font-size:7.9px;line-height:9.6px;color:#181818"><span style="font-family:IPAGothic,'Liberation Mono',monospace;font-size:1.0em;letter-spacing:0px">4</span></span>
<span class="t" style="left:2.8000000000000114px;top:47.9px;font-size:7.9px;line-height:9.6px;color:#181818"><span style="font-family:IPAGothic,'Liberation Mono',monospace;font-size:1.0em;letter-spacing:0px">5</span></span>
<span class="t" style="left:30.100000000000023px;top:47.9px;font-size:7.9px;line-height:9.6px;color:#181818"><span style="font-family:IPAGothic,'Liberation Mono',monospace;font-size:1.0em;letter-spacing:0px">_n4</span></span>
<span class="t" style="left:81.69999999999999px;top:47.9px;font-size:7.9px;line-height:9.6px;color:#181818"><span style="font-family:IPAGothic,'Liberation Mono',monospace;font-size:1.0em;letter-spacing:0px">X100</span></span>
<span class="t" style="left:149.10000000000002px;top:47.9px;font-size:7.9px;line-height:9.6px;color:#181818"><span style="font-family:IPAGothic,'Liberation Mono',monospace;font-size:1.0em;letter-spacing:0px">5</span></span>
<span class="t" style="left:213.89999999999998px;top:47.9px;font-size:7.9px;line-height:9.6px;color:#181818"><span style="font-family:IPAGothic,'Liberation Mono',monospace;font-size:1.0em;letter-spacing:0px">X2</span></span>
<span class="t" style="left:280.5px;top:47.9px;font-size:7.9px;line-height:9.6px;color:#181818"><span style="font-family:IPAGothic,'Liberation Mono',monospace;font-size:1.0em;letter-spacing:0px">5</span></span>
<span class="t" style="left:2.8000000000000114px;top:56.299999999999976px;font-size:7.9px;line-height:9.6px;color:#181818"><span style="font-family:IPAGothic,'Liberation Mono',monospace;font-size:1.0em;letter-spacing:0px">6</span></span>
<span class="t" style="left:30.100000000000023px;top:56.299999999999976px;font-size:7.9px;line-height:9.6px;color:#181818"><span style="font-family:IPAGothic,'Liberation Mono',monospace;font-size:1.0em;letter-spacing:0px">_n4</span></span>
<span class="t" style="left:81.69999999999999px;top:56.299999999999976px;font-size:7.9px;line-height:9.6px;color:#181818"><span style="font-family:IPAGothic,'Liberation Mono',monospace;font-size:1.0em;letter-spacing:0px">X100</span></span>
<span class="t" style="left:149.10000000000002px;top:56.299999999999976px;font-size:7.9px;line-height:9.6px;color:#181818"><span style="font-family:IPAGothic,'Liberation Mono',monospace;font-size:1.0em;letter-spacing:0px">6</span></span>
<span class="t" style="left:213.89999999999998px;top:56.299999999999976px;font-size:7.9px;line-height:9.6px;color:#181818"><span style="font-family:IPAGothic,'Liberation Mono',monospace;font-size:1.0em;letter-spacing:0px">X2</span></span>
<span class="t" style="left:280.5px;top:56.299999999999976px;font-size:7.9px;line-height:9.6px;color:#181818"><span style="font-family:IPAGothic,'Liberation Mono',monospace;font-size:1.0em;letter-spacing:0px">6</span></span>
</div>
<div style="left:309.5px;top:553.6px;width:753px;height:12px;background:#ece9d8;border-top:1px solid #f8f7f0;border-bottom:1px solid #c8c4b0"></div>
<span class="t" style="left:311px;top:554.8000000000001px;font-size:8px;line-height:10px;font-weight:500;">明细表</span>
<svg style="left:1054.5px;top:556.6px" width="6" height="6" viewBox="0 0 6 6" ><path d="M0.8 0.8 L5.2 5.2 M5.2 0.8 L0.8 5.2" stroke="#000" stroke-width="1.3"/></svg>
<div style="left:309.5px;top:566.2px;width:753.5px;height:52.39999999999998px;background:#fff;border:1px solid #6c6a60;border-right-color:#222;border-bottom:1.3px solid #111;overflow:hidden"></div>
<div style="left:310.3px;top:567.0px;width:741.5px;height:10.8px;background:linear-gradient(#f1efe4,#ebe8d8 80%,#dfdccc);border-bottom:1px solid #cac6b4"></div>
<svg style="left:0px;top:0px" width="1110" height="727" viewBox="0 0 1110 727" ><line x1="310" y1="584.1" x2="1051.5" y2="584.1" stroke="#eae8e0" stroke-width="0.8"/><line x1="310" y1="592.5" x2="1051.5" y2="592.5" stroke="#eae8e0" stroke-width="0.8"/><line x1="310" y1="600.9" x2="1051.5" y2="600.9" stroke="#eae8e0" stroke-width="0.8"/><line x1="310" y1="609.3" x2="1051.5" y2="609.3" stroke="#eae8e0" stroke-width="0.8"/><line x1="335" y1="568.2" x2="335" y2="577.0" stroke="#b8b4a0" stroke-width="0.9"/><line x1="335.8" y1="568.2" x2="335.8" y2="577.0" stroke="#fff" stroke-width="0.7"/><line x1="335" y1="578.0" x2="335" y2="617.1" stroke="#e4e2da" stroke-width="0.8"/><line x1="388.3" y1="568.2" x2="388.3" y2="577.0" stroke="#b8b4a0" stroke-width="0.9"/><line x1="389.1" y1="568.2" x2="389.1" y2="577.0" stroke="#fff" stroke-width="0.7"/><line x1="388.3" y1="578.0" x2="388.3" y2="617.1" stroke="#e4e2da" stroke-width="0.8"/><line x1="467.6" y1="568.2" x2="467.6" y2="577.0" stroke="#b8b4a0" stroke-width="0.9"/><line x1="468.40000000000003" y1="568.2" x2="468.40000000000003" y2="577.0" stroke="#fff" stroke-width="0.7"/><line x1="467.6" y1="578.0" x2="467.6" y2="617.1" stroke="#e4e2da" stroke-width="0.8"/><line x1="532.4" y1="568.2" x2="532.4" y2="577.0" stroke="#b8b4a0" stroke-width="0.9"/><line x1="533.1999999999999" y1="568.2" x2="533.1999999999999" y2="577.0" stroke="#fff" stroke-width="0.7"/><line x1="532.4" y1="578.0" x2="532.4" y2="617.1" stroke="#e4e2da" stroke-width="0.8"/><line x1="598.4" y1="568.2" x2="598.4" y2="577.0" stroke="#b8b4a0" stroke-width="0.9"/><line x1="599.1999999999999" y1="568.2" x2="599.1999999999999" y2="577.0" stroke="#fff" stroke-width="0.7"/><line x1="598.4" y1="578.0" x2="598.4" y2="617.1" stroke="#e4e2da" stroke-width="0.8"/><line x1="664.7" y1="568.2" x2="664.7" y2="577.0" stroke="#b8b4a0" stroke-width="0.9"/><line x1="665.5" y1="568.2" x2="665.5" y2="577.0" stroke="#fff" stroke-width="0.7"/><line x1="664.7" y1="578.0" x2="664.7" y2="617.1" stroke="#e4e2da" stroke-width="0.8"/><line x1="700" y1="568.2" x2="700" y2="577.0" stroke="#b8b4a0" stroke-width="0.9"/><line x1="700.8" y1="568.2" x2="700.8" y2="577.0" stroke="#fff" stroke-width="0.7"/><line x1="700" y1="578.0" x2="700" y2="617.1" stroke="#e4e2da" stroke-width="0.8"/><line x1="730.7" y1="568.2" x2="730.7" y2="577.0" stroke="#b8b4a0" stroke-width="0.9"/><line x1="731.5" y1="568.2" x2="731.5" y2="577.0" stroke="#fff" stroke-width="0.7"/><line x1="730.7" y1="578.0" x2="730.7" y2="617.1" stroke="#e4e2da" stroke-width="0.8"/></svg>
<span class="t" style="left:312.0px;top:567.8000000000001px;font-size:7.8px;line-height:10px;color:#111">序号</span>
<span class="t" style="left:337.6px;top:567.4000000000001px;font-size:8.9px;line-height:10px;color:#111;transform:scaleX(0.9);transform-origin:0 0">primitive</span>
<span class="t" style="left:390.90000000000003px;top:567.4000000000001px;font-size:8.9px;line-height:10px;color:#111;transform:scaleX(0.9);transform-origin:0 0">ref</span>
<span class="t" style="left:470.20000000000005px;top:567.4000000000001px;font-size:8.9px;line-height:10px;color:#111;transform:scaleX(0.9);transform-origin:0 0">footprint</span>
<span class="t" style="left:535.0px;top:567.4000000000001px;font-size:8.9px;line-height:10px;color:#111;transform:scaleX(0.9);transform-origin:0 0">bottomview</span>
<span class="t" style="left:601.0px;top:567.4000000000001px;font-size:8.9px;line-height:10px;color:#111;transform:scaleX(0.9);transform-origin:0 0">profile</span>
<span class="t" style="left:667.3000000000001px;top:567.8000000000001px;font-size:7.8px;line-height:10px;color:#111">属性<span style="font-family:IPAGothic,'Liberation Mono',monospace;font-size:1.0em;letter-spacing:0px">1</span></span>
<span class="t" style="left:702.6px;top:567.8000000000001px;font-size:7.8px;line-height:10px;color:#111">属性<span style="font-family:IPAGothic,'Liberation Mono',monospace;font-size:1.0em;letter-spacing:0px">2</span></span>
<div style="left:1051.7px;top:567.2px;width:10px;height:50.09999999999998px;background:linear-gradient(90deg,#f0efe8,#fdfdfb)"></div>
<div style="left:1052.0px;top:567.5px;width:9.4px;height:9.4px;background:linear-gradient(135deg,#d4e0fc,#b4c8f4);border:1px solid #f0f4ff;border-radius:2px;box-shadow:0 0 0 0.5px #98b0e8"></div>
<svg style="left:1052.0px;top:567.5px" width="9.4" height="9.4" viewBox="0 0 9.4 9.4" ><path d="M2.2 6.2 L4.7 3.2 L7.2 6.2" stroke="#3858a8" stroke-width="1.5" fill="none"/></svg>
<div style="left:1052.0px;top:607.6px;width:9.4px;height:9.4px;background:linear-gradient(135deg,#d4e0fc,#b4c8f4);border:1px solid #f0f4ff;border-radius:2px;box-shadow:0 0 0 0.5px #98b0e8"></div>
<svg style="left:1052.0px;top:607.6px" width="9.4" height="9.4" viewBox="0 0 9.4 9.4" ><path d="M2.2 3.2 L4.7 6.2 L7.2 3.2" stroke="#3858a8" stroke-width="1.5" fill="none"/></svg>
<div style="left:1052.0px;top:577.8000000000001px;width:9.4px;height:6px;background:#c0d0f8;border:1px solid #f0f4ff;border-radius:1.5px;box-shadow:0 0 0 0.5px #98b0e8"></div>
<div style="left:309.5px;top:566.2px;width:742px;height:51.19999999999993px;overflow:hidden">
<span class="t" style="left:2.8000000000000114px;top:13.4px;font-size:7.9px;line-height:9.6px;color:#181818;"><span style="font-family:IPAGothic,'Liberation Mono',monospace;font-size:1.0em;letter-spacing:0px">1</span></span>
<span class="t" style="left:30.100000000000023px;top:13.4px;font-size:7.9px;line-height:9.6px;color:#181818;font-weight:bold;"><span style="font-family:IPAGothic,'Liberation Mono',monospace;font-size:1.0em;letter-spacing:0px">signal g...</span></span>
<span class="t" style="left:81.69999999999999px;top:13.4px;font-size:7.9px;line-height:9.6px;color:#181818;"><span style="font-family:IPAGothic,'Liberation Mono',monospace;font-size:1.0em;letter-spacing:0px">I</span></span>
<span class="t" style="left:161.0px;top:13.4px;font-size:7.9px;line-height:9.6px;color:#181818;"><span style="font-family:IPAGothic,'Liberation Mono',monospace;font-size:1.0em;letter-spacing:0px">*opt*</span></span>
<span class="t" style="left:226.0px;top:13.4px;font-size:7.9px;line-height:9.6px;color:#181818;"><span style="font-family:IPAGothic,'Liberation Mono',monospace;font-size:1.0em;letter-spacing:0px">*opt*</span></span>
<span class="t" style="left:292.0px;top:13.4px;font-size:7.9px;line-height:9.6px;color:#181818;"><span style="font-family:IPAGothic,'Liberation Mono',monospace;font-size:1.0em;letter-spacing:0px">*opt*</span></span>
<span class="t" style="left:358.5px;top:11.9px;font-size:10.5px;line-height:10px;color:#444">×</span>
<span class="t" style="left:394.0px;top:11.9px;font-size:10.5px;line-height:10px;color:#444">×</span>
<span class="t" style="left:2.8000000000000114px;top:21.699999999999953px;font-size:7.9px;line-height:9.6px;color:#181818;"><span style="font-family:IPAGothic,'Liberation Mono',monospace;font-size:1.0em;letter-spacing:0px">2</span></span>
<span class="t" style="left:30.100000000000023px;top:21.699999999999953px;font-size:7.9px;line-height:9.6px;color:#181818;font-weight:bold;"><span style="font-family:IPAGothic,'Liberation Mono',monospace;font-size:1.0em;letter-spacing:0px">Earth</span></span>
<span class="t" style="left:81.69999999999999px;top:21.699999999999953px;font-size:7.9px;line-height:9.6px;color:#181818;"><span style="font-family:IPAGothic,'Liberation Mono',monospace;font-size:1.0em;letter-spacing:0px">GND</span></span>
<span class="t" style="left:161.0px;top:21.699999999999953px;font-size:7.9px;line-height:9.6px;color:#181818;"><span style="font-family:IPAGothic,'Liberation Mono',monospace;font-size:1.0em;letter-spacing:0px">*opt*</span></span>
<span class="t" style="left:226.0px;top:21.699999999999953px;font-size:7.9px;line-height:9.6px;color:#181818;"><span style="font-family:IPAGothic,'Liberation Mono',monospace;font-size:1.0em;letter-spacing:0px">*opt*</span></span>
<span class="t" style="left:292.0px;top:21.699999999999953px;font-size:7.9px;line-height:9.6px;color:#181818;"><span style="font-family:IPAGothic,'Liberation Mono',monospace;font-size:1.0em;letter-spacing:0px">*opt*</span></span>
<span class="t" style="left:358.5px;top:20.199999999999953px;font-size:10.5px;line-height:10px;color:#444">×</span>
<span class="t" style="left:394.0px;top:20.199999999999953px;font-size:10.5px;line-height:10px;color:#444">×</span>
<span class="t" style="left:2.8000000000000114px;top:29.999999999999908px;font-size:7.9px;line-height:9.6px;color:#181818;"><span style="font-family:IPAGothic,'Liberation Mono',monospace;font-size:1.0em;letter-spacing:0px">3</span></span>
<span class="t" style="left:30.100000000000023px;top:29.999999999999908px;font-size:7.9px;line-height:9.6px;color:#181818;font-weight:bold;"><span style="font-family:IPAGothic,'Liberation Mono',monospace;font-size:1.0em;letter-spacing:0px">Earth</span></span>
<span class="t" style="left:81.69999999999999px;top:29.999999999999908px;font-size:7.9px;line-height:9.6px;color:#181818;"><span style="font-family:IPAGothic,'Liberation Mono',monospace;font-size:1.0em;letter-spacing:0px">GND</span></span>
<span class="t" style="left:161.0px;top:29.999999999999908px;font-size:7.9px;line-height:9.6px;color:#181818;"><span style="font-family:IPAGothic,'Liberation Mono',monospace;font-size:1.0em;letter-spacing:0px">*opt*</span></span>
<span class="t" style="left:226.0px;top:29.999999999999908px;font-size:7.9px;line-height:9.6px;color:#181818;"><span style="font-family:IPAGothic,'Liberation Mono',monospace;font-size:1.0em;letter-spacing:0px">*opt*</span></span>
<span class="t" style="left:292.0px;top:29.999999999999908px;font-size:7.9px;line-height:9.6px;color:#181818;"><span style="font-family:IPAGothic,'Liberation Mono',monospace;font-size:1.0em;letter-spacing:0px">*opt*</span></span>
<span class="t" style="left:358.5px;top:28.499999999999908px;font-size:10.5px;line-height:10px;color:#444">×</span>
<span class="t" style="left:394.0px;top:28.499999999999908px;font-size:10.5px;line-height:10px;color:#444">×</span>
<span class="t" style="left:2.8000000000000114px;top:38.49999999999991px;font-size:7.9px;line-height:9.6px;color:#181818;"><span style="font-family:IPAGothic,'Liberation Mono',monospace;font-size:1.0em;letter-spacing:0px">4</span></span>
<span class="t" style="left:30.100000000000023px;top:38.49999999999991px;font-size:7.9px;line-height:9.6px;color:#181818;font-weight:bold;"><span style="font-family:IPAGothic,'Liberation Mono',monospace;font-size:1.0em;letter-spacing:0px">1N914</span></span>
<span class="t" style="left:81.69999999999999px;top:38.49999999999991px;font-size:7.9px;line-height:9.6px;color:#181818;"><span style="font-family:IPAGothic,'Liberation Mono',monospace;font-size:1.0em;letter-spacing:0px">V1</span></span>
<span class="t" style="left:161.0px;top:38.49999999999991px;font-size:7.9px;line-height:9.6px;color:#181818;"><span style="font-family:IPAGothic,'Liberation Mono',monospace;font-size:1.0em;letter-spacing:0px">*opt*</span></span>
<span class="t" style="left:226.0px;top:38.49999999999991px;font-size:7.9px;line-height:9.6px;color:#181818;"><span style="font-family:IPAGothic,'Liberation Mono',monospace;font-size:1.0em;letter-spacing:0px">*opt*</span></span>
<span class="t" style="left:292.0px;top:38.49999999999991px;font-size:7.9px;line-height:9.6px;color:#181818;"><span style="font-family:IPAGothic,'Liberation Mono',monospace;font-size:1.0em;letter-spacing:0px">*opt*</span></span>
<span class="t" style="left:358.5px;top:36.99999999999991px;font-size:10.5px;line-height:10px;color:#444">×</span>
<span class="t" style="left:394.0px;top:36.99999999999991px;font-size:10.5px;line-height:10px;color:#444">×</span>
<span class="t" style="left:2.8000000000000114px;top:46.9px;font-size:7.9px;line-height:9.6px;color:#181818;"><span style="font-family:IPAGothic,'Liberation Mono',monospace;font-size:1.0em;letter-spacing:0px">5</span></span>
<span class="t" style="left:30.100000000000023px;top:46.9px;font-size:7.9px;line-height:9.6px;color:#181818;font-weight:bold;"><span style="font-family:IPAGothic,'Liberation Mono',monospace;font-size:1.0em;letter-spacing:0px">Power_xx</span></span>
<span class="t" style="left:81.69999999999999px;top:46.9px;font-size:7.9px;line-height:9.6px;color:#181818;"><span style="font-family:IPAGothic,'Liberation Mono',monospace;font-size:1.0em;letter-spacing:0px">I</span></span>
<span class="t" style="left:161.0px;top:46.9px;font-size:7.9px;line-height:9.6px;color:#181818;"><span style="font-family:IPAGothic,'Liberation Mono',monospace;font-size:1.0em;letter-spacing:0px">*opt*</span></span>
<span class="t" style="left:226.0px;top:46.9px;font-size:7.9px;line-height:9.6px;color:#181818;"><span style="font-family:IPAGothic,'Liberation Mono',monospace;font-size:1.0em;letter-spacing:0px">*opt*</span></span>
<span class="t" style="left:292.0px;top:46.9px;font-size:7.9px;line-height:9.6px;color:#181818;"><span style="font-family:IPAGothic,'Liberation Mono',monospace;font-size:1.0em;letter-spacing:0px">*opt*</span></span>
<span class="t" style="left:358.5px;top:45.4px;font-size:10.5px;line-height:10px;color:#444">×</span>
<span class="t" style="left:394.0px;top:45.4px;font-size:10.5px;line-height:10px;color:#444">×</span>
</div>
<div style="left:309.5px;top:621.8px;width:753px;height:11.6px;background:#ece9d8;border-top:1px solid #f8f7f0;border-bottom:1px solid #c8c4b0"></div>
<span class="t" style="left:311px;top:623.0px;font-size:8px;line-height:10px;font-weight:500;">查询表</span>
<svg style="left:1054.5px;top:624.5999999999999px" width="6" height="6" viewBox="0 0 6 6" ><path d="M0.8 0.8 L5.2 5.2 M5.2 0.8 L0.8 5.2" stroke="#000" stroke-width="1.3"/></svg>
<div style="left:309.5px;top:634.4px;width:753.5px;height:59.60000000000002px;background:#fff;border:1px solid #6c6a60;border-right-color:#222;border-bottom:1.3px solid #111;overflow:hidden"></div>
<div style="left:336px;top:645.4px;width:526px;height:47.10000000000002px;background:#f7f7f7"></div>
<div style="left:310.3px;top:635.1999999999999px;width:752px;height:11px;background:linear-gradient(#f1efe4,#ebe8d8 80%,#dfdccc);border-bottom:1px solid #cac6b4"></div>
<svg style="left:0px;top:0px" width="1110" height="727" viewBox="0 0 1110 727" ><line x1="310" y1="651.2" x2="1062" y2="651.2" stroke="#eae8e0" stroke-width="0.8"/><line x1="310" y1="659.7" x2="1062" y2="659.7" stroke="#eae8e0" stroke-width="0.8"/><line x1="310" y1="668.3" x2="1062" y2="668.3" stroke="#eae8e0" stroke-width="0.8"/><line x1="310" y1="676.8" x2="1062" y2="676.8" stroke="#eae8e0" stroke-width="0.8"/><line x1="310" y1="685.4" x2="1062" y2="685.4" stroke="#eae8e0" stroke-width="0.8"/><line x1="335.5" y1="636.4" x2="335.5" y2="645.4" stroke="#b8b4a0" stroke-width="0.9"/><line x1="336.3" y1="636.4" x2="336.3" y2="645.4" stroke="#fff" stroke-width="0.7"/><line x1="335.5" y1="646.4" x2="335.5" y2="692.5" stroke="#e4e2da" stroke-width="0.8"/><line x1="862.5" y1="636.4" x2="862.5" y2="645.4" stroke="#b8b4a0" stroke-width="0.9"/><line x1="863.3" y1="636.4" x2="863.3" y2="645.4" stroke="#fff" stroke-width="0.7"/><line x1="862.5" y1="646.4" x2="862.5" y2="692.5" stroke="#e4e2da" stroke-width="0.8"/></svg>
<span class="t" style="left:312.0px;top:636.0px;font-size:7.8px;line-height:10px;color:#111">序号</span>
<span class="t" style="left:338.1px;top:636.0px;font-size:7.8px;line-height:10px;color:#111">描述</span>
<svg style="left:852px;top:637px" width="8" height="7" viewBox="0 0 8 7" ><path d="M1.5 1.5 h4.5 l-2.2 4z" fill="none" stroke="#a0a090" stroke-width="0.7"/></svg>
<span class="t" style="left:312.3px;top:646.5px;font-size:7.6px;line-height:9.6px;font-weight:500;"><span style="font-family:IPAGothic,'Liberation Mono',monospace;font-size:1.0em;letter-spacing:0px">1</span></span>
<span class="t" style="left:339px;top:646.3px;font-size:7.9px;line-height:9.9px;font-weight:500;">图名<span style="font-family:IPAGothic,'Liberation Mono',monospace;font-size:1.0em;letter-spacing:0px">:</span>控制组合电原理图</span>
<span class="t" style="left:438.7px;top:646.3px;font-size:7.9px;line-height:9.9px;font-weight:500;">名称：<span style="font-family:IPAGothic,'Liberation Mono',monospace;font-size:1.0em;letter-spacing:0px">G1</span></span>
<div style="left:173px;top:694px;width:924px;height:13.5px;background:#ece9d8;border-top:1px solid #f4f2e8"></div>
<span class="t" style="left:175px;top:697px;font-size:8px;line-height:10px;color:#111">Ready</span>
<div style="left:823px;top:695.6px;width:199.20000000000005px;height:10.8px;border:1px solid;border-color:#b8b4a2 #f8f7f0 #f8f7f0 #b8b4a2"></div>
<span class="t" style="left:824.2px;top:696.2px;font-size:8.6px;line-height:10px;color:#9c9a8c;transform:scaleX(1);transform-origin:0 0">121(毫米), 10(毫米)  | 12181, 1006</span>
<div style="left:1024.9px;top:695.6px;width:16.699999999999818px;height:10.8px;border:1px solid;border-color:#b8b4a2 #f8f7f0 #f8f7f0 #b8b4a2"></div>
<span class="t" style="left:1026.1000000000001px;top:696.2px;font-size:8.4px;line-height:10px;color:#000;transform:scaleX(0.86);transform-origin:0 0">CAP</span>
<div style="left:1043px;top:695.6px;width:19px;height:10.8px;border:1px solid;border-color:#b8b4a2 #f8f7f0 #f8f7f0 #b8b4a2"></div>
<span class="t" style="left:1044.2px;top:696.2px;font-size:8.4px;line-height:10px;color:#aca899;transform:scaleX(0.9);transform-origin:0 0">NUM</span>
<div style="left:1063.5px;top:695.6px;width:20.0px;height:10.8px;border:1px solid;border-color:#b8b4a2 #f8f7f0 #f8f7f0 #b8b4a2"></div>
<span class="t" style="left:1064.9px;top:696.2px;font-size:8.4px;line-height:10px;color:#aca899;transform:scaleX(0.8);transform-origin:0 0">SCRL</span>
<svg style="left:1088px;top:698px" width="9" height="9" viewBox="0 0 9 9" ><path d="M8 1 L1 8 M8 4 L4 8 M8 7 L7 8" stroke="#b8b4a0" stroke-width="0.9"/></svg>
<div style="left:173px;top:706.8px;width:62px;height:2.2px;background:#5c9a58"></div>
<div style="left:235px;top:706.8px;width:775px;height:2.2px;background:#5488c0"></div>
<div style="left:1010px;top:706.8px;width:87px;height:2.2px;background:#52a4cc"></div>
<div style="left:1063.5px;top:99px;width:15.5px;height:413px;background:linear-gradient(90deg,#f6f5ee,#ece9d8)"></div>
<div style="left:1080px;top:99px;width:17px;height:282px;background:linear-gradient(90deg,#f4f3ec,#ece9d8)"></div>
<svg style="left:1066px;top:100.5px" width="12" height="3" viewBox="0 0 12 3" ><rect x="0" y="0" width="1.6" height="1.6" fill="#bcb8a4"/><rect x="3" y="0" width="1.6" height="1.6" fill="#bcb8a4"/><rect x="6" y="0" width="1.6" height="1.6" fill="#bcb8a4"/><rect x="9" y="0" width="1.6" height="1.6" fill="#bcb8a4"/></svg>
<svg style="left:1082.5px;top:100.5px" width="12" height="3" viewBox="0 0 12 3" ><rect x="0" y="0" width="1.6" height="1.6" fill="#bcb8a4"/><rect x="3" y="0" width="1.6" height="1.6" fill="#bcb8a4"/><rect x="6" y="0" width="1.6" height="1.6" fill="#bcb8a4"/><rect x="9" y="0" width="1.6" height="1.6" fill="#bcb8a4"/></svg>
<svg style="left:1082.5px;top:218px" width="12" height="3" viewBox="0 0 12 3" ><rect x="0" y="0" width="1.6" height="1.6" fill="#bcb8a4"/><rect x="3" y="0" width="1.6" height="1.6" fill="#bcb8a4"/><rect x="6" y="0" width="1.6" height="1.6" fill="#bcb8a4"/><rect x="9" y="0" width="1.6" height="1.6" fill="#bcb8a4"/></svg>
<svg style="left:0px;top:0px" width="1110" height="727" viewBox="0 0 1110 727" ><g transform="translate(1071.3 111.2)"><path d="M-4.5 0 h9" stroke="#202020" stroke-width="1.1"/></g><g transform="translate(1071.3 125.2)"><path d="M-4.2 -3.2 l2.6 6.5 l2.2 -6.5 l3.4 7" stroke="#202020" stroke-width="1.05" fill="none"/></g><g transform="translate(1071.3 139.1)"><rect x="-4" y="-3.5" width="8" height="7" stroke="#202020" stroke-width="1.1" fill="none"/></g><g transform="translate(1071.3 153)"><circle r="3" stroke="#202020" stroke-width="1.1" fill="none"/></g><g transform="translate(1071.3 166.7)"><ellipse rx="4.5" ry="2.6" stroke="#202020" stroke-width="1.1" fill="none"/></g><g transform="translate(1071.3 180.9)"><path d="M-3.5 -3 q5 0 6 6" stroke="#202020" stroke-width="1.4" fill="none"/></g><g transform="translate(1071.3 194.5)"><ellipse rx="4.8" ry="1.8" transform="rotate(50)" stroke="#202020" stroke-width="1.1" fill="none"/></g><g transform="translate(1071.3 208.8)"><path d="M-3.5 3.5 v-7 q6 0.5 7 7z" stroke="#202020" stroke-width="1.1" fill="none"/></g><g transform="translate(1071.3 222.4)"><path d="M-3.5 3.5 v-5.5 l1.5 -1.5 h4.5 v3 l1.5 1 v3z" stroke="#202020" stroke-width="1.1" fill="none"/></g><text x="1071.3" y="240.4" font-family="Liberation Sans, sans-serif" font-size="9.5" font-weight="bold" text-anchor="middle" fill="#202020">A</text><g transform="translate(1071.3 251.2)"><path d="M-3 3 l1 -3 l4.5 -4 l1.5 1.5 l-4.5 4z" stroke="#202020" stroke-width="0.8" fill="#fff"/><path d="M-4 4 q3 -1.5 5 0" stroke="#202020" stroke-width="0.8" fill="none"/></g><line x1="1065.3" y1="259.7" x2="1077.3" y2="259.7" stroke="#c4c0ac" stroke-width="0.9"/><g transform="translate(1071.3 269.4)"><path d="M-5 0 h3 M2 0 h3.5" stroke="#e08020" stroke-width="1"/><path d="M-2 -3 v6 l4 -3z" fill="#f8d040" stroke="#e08020" stroke-width="0.8"/><path d="M2.5 -3 v6" stroke="#e08020" stroke-width="1"/></g><g transform="translate(1071.3 283)"><path d="M-4 -3 h3.5 v5.5 h4" stroke="#e04060" stroke-width="1" fill="none"/><rect x="-5" y="-4" width="2" height="2" fill="#40c8c8"/><rect x="3" y="2" width="2" height="2" fill="#40c8c8"/></g><g transform="translate(1071.3 297.6)"><path d="M-5 0 h10 M0 -4.5 v9" stroke="#8040c0" stroke-width="0.9"/><circle r="1.6" fill="#6030b0"/></g><line x1="1065.3" y1="305.8" x2="1077.3" y2="305.8" stroke="#c4c0ac" stroke-width="0.9"/><g transform="translate(1071.3 315.8)"><path d="M-4.5 -2.5 l2 1.7 h5 l2 -1.7 M-4.5 3 l2 -1.7 h5 l2 1.7" stroke="#202020" stroke-width="1" fill="none"/><path d="M-2.5 -0.8 h5" stroke="#202020" stroke-width="1.3"/></g><line x1="1065.3" y1="324.2" x2="1077.3" y2="324.2" stroke="#c4c0ac" stroke-width="0.9"/><g transform="translate(1071.3 334.8)"><path d="M-0.5 -3.8 v7.6" stroke="#d83838" stroke-width="1"/><path d="M-3.5 -3.6 h3.5 l3.6 2.2 l-3.6 1.6z" fill="#ec6868" stroke="#d83838" stroke-width="0.7"/><path d="M-0.5 0.8 l3.6 1.8" stroke="#d83838" stroke-width="0.8"/></g><g transform="translate(1071.3 348.5)"><path d="M-2.5 -2.3 l4.6 4.4" stroke="#e04858" stroke-width="0.9"/></g><line x1="1065.3" y1="357.6" x2="1077.3" y2="357.6" stroke="#c4c0ac" stroke-width="0.9"/><g transform="translate(1071.3 368.2)"><rect x="-4" y="-4" width="8" height="8" fill="#3c9c4c" stroke="#a05838" stroke-width="0.9"/></g><g transform="translate(1070.8 381.8)"><rect x="-4" y="-4" width="6.5" height="8" fill="#3c9c4c" stroke="#a05838" stroke-width="0.8"/><path d="M2.5 -1.5 h3 v4 h-3" stroke="#e05050" stroke-width="0.9" fill="none"/></g><line x1="1065.3" y1="390.3" x2="1077.3" y2="390.3" stroke="#c4c0ac" stroke-width="0.9"/><g transform="translate(1071.3 400)"><path d="M-4.8 -0.8 l2.4 -1.6 l4.2 4 l2.6 -0.8" stroke="#e04858" stroke-width="0.9" fill="none"/><path d="M2 0.2 v2.6" stroke="#e04858" stroke-width="0.8" fill="none"/></g><g transform="translate(1071.3 415.2)"><rect x="-4.5" y="-2" width="9" height="4" fill="none" stroke="#e04858" stroke-width="0.85"/></g><line x1="1065.3" y1="424.2" x2="1077.3" y2="424.2" stroke="#c4c0ac" stroke-width="0.9"/><g transform="translate(1071.3 434)"><rect x="-3.2" y="-3.2" width="6.4" height="6.4" fill="#aaa89c"/></g><g transform="translate(1071.3 447.9)"><path d="M-3.2 -3.2 h6.4 v6.4 h-6.4 l2 -3.2z" fill="#aaa89c"/></g><g transform="translate(1071.3 462.1)"><path d="M-3.2 -3.2 h4 l2.6 3.2 l-2.6 3.2 h-4z" fill="#aaa89c"/></g><g transform="translate(1071.3 475.8)"><path d="M0 -3.6 l3.6 3.6 l-3.6 3.6 l-3.6 -3.6z" fill="#aaa89c"/></g><g transform="translate(1071.3 490)"><path d="M-1.6 -2.8 h3.2 l1.6 2.8 l-1.6 2.8 h-3.2 l-1.6 -2.8z" fill="#aaa89c"/></g><g transform="translate(1071.3 503.6)"><path d="M-4.5 0 h9 M0 -4.5 v9" stroke="#aaa89c" stroke-width="0.9"/><path d="M0.5 -2.5 l3 2.5 l-3 2.5z" fill="#f4f2e8" stroke="#aaa89c" stroke-width="0.8"/></g><g transform="translate(1087.9 111.2)"><path d="M-5.5 0 h2 M3.5 0 h2" stroke="#a84444" stroke-width="0.7"/><rect x="-3.5" y="-1.6" width="7" height="3.2" fill="none" stroke="#a84444" stroke-width="0.75"/></g><g transform="translate(1087.9 124.8)"><rect x="-3.8" y="-3.5" width="7.6" height="2.6" fill="none" stroke="#a84444" stroke-width="0.75"/><path d="M-3.8 1 h7.6 M-3.8 3.3 h7.6 M-2 -0.9 v4 M2 -0.9 v4" stroke="#a84444" stroke-width="0.75"/></g><g transform="translate(1087.9 139.1)"><path d="M-3.5 4 v-4.5 l1.5 -2.5 h4 l1.5 2.5 v4.5" stroke="#d08c8c" stroke-width="0.7" fill="none"/><path d="M-1.5 -3 v-1.5 h3 v1.5" stroke="#d08c8c" stroke-width="0.65" fill="none"/></g><g transform="translate(1087.9 153)"><ellipse cx="0" cy="-1.8" rx="3.6" ry="2.2" stroke="#d08c8c" stroke-width="0.7" fill="none"/><path d="M0 0.5 v3.5 M-2 4 h4" stroke="#d08c8c" stroke-width="0.7"/></g><g transform="translate(1087.9 166.7)"><path d="M-5.5 0 l3.5 -3.8 h7 v7.6 h-7z" stroke="#a84444" stroke-width="0.7" fill="none"/><circle cx="1.3" cy="0" r="1.7" fill="none" stroke="#a84444" stroke-width="0.65"/></g><g transform="translate(1087.9 180.9)"><rect x="-3.8" y="-3.8" width="7.6" height="7.6" stroke="#d08c8c" stroke-width="0.7" fill="none"/><rect x="-1.2" y="-1.2" width="2.4" height="2.4" fill="none" stroke="#a84444" stroke-width="0.65"/></g><g transform="translate(1087.9 194.5)"><rect x="-2.6" y="-4" width="5.2" height="8" fill="#a84444"/><path d="M-4.5 -2.5 h9 M-4.5 0 h9 M-4.5 2.5 h9" stroke="#a84444" stroke-width="0.7"/></g><g transform="translate(1087.9 208.8)"><rect x="-4.2" y="-4" width="8.4" height="8" stroke="#a84444" stroke-width="0.7" fill="none"/><path d="M0.5 4 v-3 h3.7" stroke="#a84444" stroke-width="0.7" fill="none"/></g><g transform="translate(1087.9 230)"><path d="M-4 -4.5 v9" stroke="#a09e90" stroke-width="0.9"/><rect x="-2.5" y="-3.5" width="6" height="2.4" fill="none" stroke="#a09e90" stroke-width="0.8"/><rect x="-2.5" y="1" width="4" height="2.4" fill="none" stroke="#a09e90" stroke-width="0.8"/></g><g transform="translate(1087.9 244)"><path d="M4 -4.5 v9" stroke="#a09e90" stroke-width="0.9"/><rect x="-3.5" y="-3.5" width="6" height="2.4" fill="none" stroke="#a09e90" stroke-width="0.8"/><rect x="-1.5" y="1" width="4" height="2.4" fill="none" stroke="#a09e90" stroke-width="0.8"/></g><g transform="translate(1087.9 257.3)"><path d="M-4.5 -4 h9" stroke="#a09e90" stroke-width="0.9"/><rect x="-3.5" y="-2.5" width="2.4" height="6" fill="none" stroke="#a09e90" stroke-width="0.8"/><rect x="1" y="-2.5" width="2.4" height="4" fill="none" stroke="#a09e90" stroke-width="0.8"/></g><g transform="translate(1087.9 271)"><path d="M-4.5 4 h9" stroke="#a09e90" stroke-width="0.9"/><rect x="-3.5" y="-3.5" width="2.4" height="6" fill="none" stroke="#a09e90" stroke-width="0.8"/><rect x="1" y="-1.5" width="2.4" height="4" fill="none" stroke="#a09e90" stroke-width="0.8"/></g><line x1="1081.9" y1="281" x2="1093.9" y2="281" stroke="#c4c0ac" stroke-width="0.9"/><g transform="translate(1087.9 290.3)"><rect x="-5" y="-4" width="10" height="8" fill="none" stroke="#a09e90" stroke-width="0.8"/><path d="M0 -4 v8 M-3.5 0 h2.5 M1 0 h2.5" stroke="#a09e90" stroke-width="0.8"/></g><g transform="translate(1087.9 304)"><rect x="-4.4" y="-4.4" width="8.8" height="8.8" fill="none" stroke="#a09e90" stroke-width="0.8"/><path d="M-4.4 -0.8 h8.8 M-4.4 1.6 h8.8 M0 -3 v2 M0 2 v2" stroke="#a09e90" stroke-width="0.8"/></g><line x1="1081.9" y1="312.7" x2="1093.9" y2="312.7" stroke="#c4c0ac" stroke-width="0.9"/><g transform="translate(1087.9 322.2)"><path d="M-1.5 -3.2 q2.6 0 3.2 2.6" stroke="#a09e90" stroke-width="0.8" fill="none"/><path d="M0.5 -1.2 l1.4 1 l0.8 -1.6" stroke="#a09e90" stroke-width="0.7" fill="none"/><path d="M-4.5 0.3 h9" stroke="#a09e90" stroke-width="0.7"/></g><text x="1087.9" y="328.2" font-family="Liberation Sans, sans-serif" font-size="6.6" text-anchor="middle" fill="#a09e90">90</text><g transform="translate(1087.9 337.5)"><path d="M-1.5 -3.2 q2.6 0 3.2 2.6" stroke="#a09e90" stroke-width="0.8" fill="none"/><path d="M0.5 -1.2 l1.4 1 l0.8 -1.6" stroke="#a09e90" stroke-width="0.7" fill="none"/><path d="M-4.5 0.3 h9" stroke="#a09e90" stroke-width="0.7"/></g><text x="1087.9" y="343.5" font-family="Liberation Sans, sans-serif" font-size="6.6" text-anchor="middle" fill="#a09e90">180</text><g transform="translate(1087.9 351.5)"><path d="M-1.5 -3.2 q2.6 0 3.2 2.6" stroke="#a09e90" stroke-width="0.8" fill="none"/><path d="M0.5 -1.2 l1.4 1 l0.8 -1.6" stroke="#a09e90" stroke-width="0.7" fill="none"/><path d="M-4.5 0.3 h9" stroke="#a09e90" stroke-width="0.7"/></g><text x="1087.9" y="357.5" font-family="Liberation Sans, sans-serif" font-size="6.6" text-anchor="middle" fill="#a09e90">270</text><g transform="translate(1087.9 369.7)"><rect x="-4.5" y="-1.5" width="5.5" height="5.5" fill="none" stroke="#a09e90" stroke-width="0.8" stroke-dasharray="1.2 0.8"/><rect x="0" y="-3.5" width="4.5" height="5" fill="none" stroke="#a09e90" stroke-width="0.8"/><path d="M-2 -3 q1 -2 3 -1.5" stroke="#a09e90" stroke-width="0.7" fill="none"/></g></svg>
<span class="s" style="left:13px;top:24.8px;font-size:17px;line-height:20px;color:#222">标题栏</span>
<span class="s" style="left:13px;top:59.8px;font-size:17px;line-height:20px;color:#222">菜单栏</span>
<span class="s" style="left:13px;top:87.3px;font-size:17px;line-height:20px;color:#222">工具栏</span>
<span class="s" style="left:16.3px;top:192.3px;font-size:17px;line-height:20px;color:#222">项目导航</span>
<span class="s" style="left:16.5px;top:260.3px;font-size:17px;line-height:20px;color:#222">设计窗口</span>
<span class="s" style="left:24.8px;top:388.3px;font-size:17px;line-height:20px;color:#222">属性窗口</span>
<span class="s" style="left:14.6px;top:481.1px;font-size:17px;line-height:20px;color:#222">导线表窗口</span>
<span class="s" style="left:16.6px;top:570.0999999999999px;font-size:17px;line-height:20px;color:#222">明细表窗口</span>
<span class="s" style="left:9.8px;top:639.8px;font-size:17px;line-height:20px;color:#222">查询显示窗口</span>
<svg style="left:0px;top:0px" width="1110" height="727" viewBox="0 0 1110 727" ><line x1="114.3" y1="48" x2="166" y2="48" stroke="#000" stroke-width="2.3"/><path d="M177 48 L164 41 L164 55z" fill="#000"/><line x1="114.3" y1="75.1" x2="166" y2="75.1" stroke="#000" stroke-width="2.3"/><path d="M177 75.1 L164 68.1 L164 82.1z" fill="#000"/><line x1="114.3" y1="102" x2="166" y2="102" stroke="#000" stroke-width="2.3"/><path d="M177 102 L164 95 L164 109z" fill="#000"/><line x1="114.6" y1="201.7" x2="166" y2="201.7" stroke="#000" stroke-width="2.3"/><path d="M177 201.7 L164 194.7 L164 208.7z" fill="#000"/><line x1="114.6" y1="398.8" x2="166" y2="398.8" stroke="#000" stroke-width="2.3"/><path d="M177 398.8 L164 391.8 L164 405.8z" fill="#000"/><line x1="114.5" y1="272.6" x2="313" y2="273" stroke="#000" stroke-width="2.2"/><line x1="118.7" y1="487" x2="387.3" y2="488.6" stroke="#000" stroke-width="2.3"/><path d="M398.3 488.6 L385.3 481.6 L385.3 495.6z" fill="#000"/><line x1="115.3" y1="578.8" x2="395" y2="578.8" stroke="#000" stroke-width="2.4"/><path d="M407 578.8 L393 571.8 L393 585.8z" fill="#000"/><line x1="114.2" y1="651" x2="396" y2="651" stroke="#000" stroke-width="2.3"/><path d="M408 651 L394 644 L394 658z" fill="#000"/><path d="M219.8 705.3 L213.0 717.8 L226.60000000000002 717.8z" fill="#000"/><line x1="219.8" y1="716.3" x2="219.8" y2="727" stroke="#000" stroke-width="2.4"/><path d="M846.5 706.8 L839.7 719.3 L853.3 719.3z" fill="#000"/><line x1="846.5" y1="717.8" x2="846.5" y2="727" stroke="#000" stroke-width="2.4"/><path d="M1000.8 708 C1000.8 721 1002.5 722.6 1012 722.6 L1032 722.6 C1039.5 722.6 1042.2 724 1042.9 728 C1043.6 724 1046.3 722.6 1054 722.6 L1075 722.6 C1084.5 722.6 1086.2 721 1086.2 708" fill="none" stroke="#000" stroke-width="1.9"/></svg>
</body></html>
